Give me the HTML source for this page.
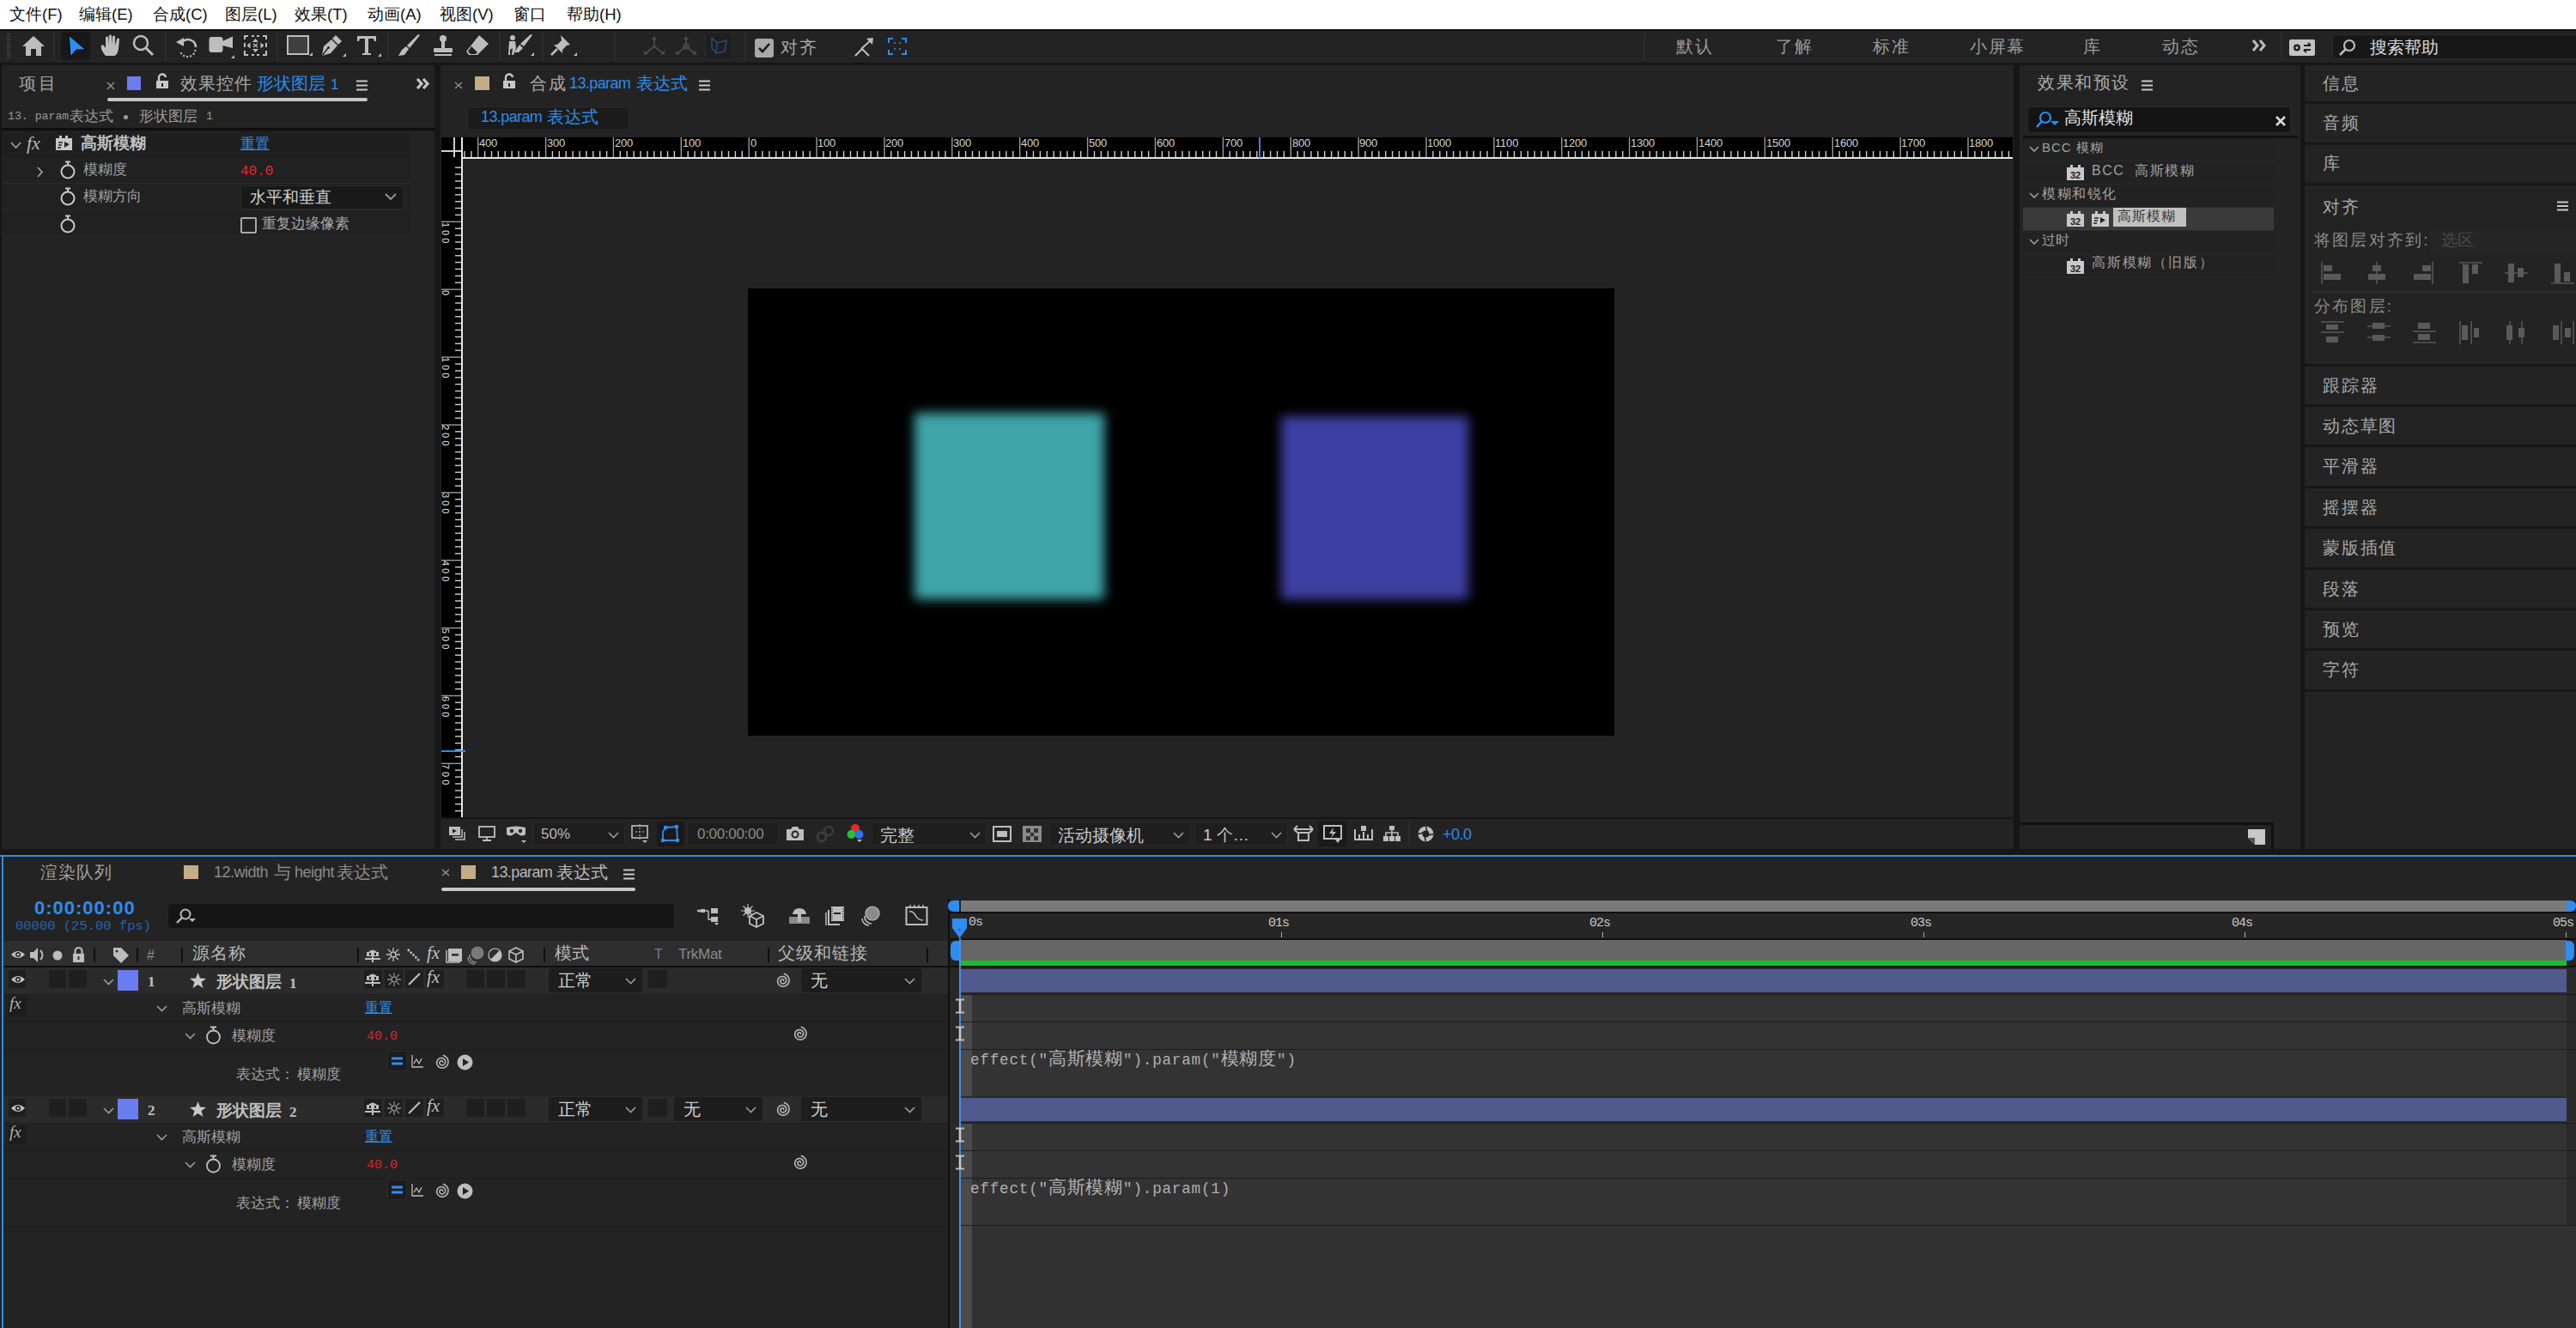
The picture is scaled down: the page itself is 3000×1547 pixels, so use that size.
<!DOCTYPE html>
<html><head><meta charset="utf-8">
<style>
*{box-sizing:border-box;margin:0;padding:0}
html,body{width:3000px;height:1547px;overflow:hidden;background:#161616;font-family:"Liberation Sans",sans-serif;color:#a8a8a8}
.a{position:absolute}
.t{position:absolute;white-space:nowrap;line-height:1}
svg{overflow:visible}
</style></head><body>
<div class="a" style="left:0px;top:0px;width:3000px;height:34px;background:#ffffff;"></div>
<div class="a" style="left:0px;top:34px;width:3000px;height:2px;background:#101010;"></div>
<div class="t" style="left:11px;top:8px;font-size:18.5px;color:#111;font-weight:normal;font-family:'Liberation Sans',sans-serif;">文件(F)</div>
<div class="t" style="left:92px;top:8px;font-size:18.5px;color:#111;font-weight:normal;font-family:'Liberation Sans',sans-serif;">编辑(E)</div>
<div class="t" style="left:178px;top:8px;font-size:18.5px;color:#111;font-weight:normal;font-family:'Liberation Sans',sans-serif;">合成(C)</div>
<div class="t" style="left:262px;top:8px;font-size:18.5px;color:#111;font-weight:normal;font-family:'Liberation Sans',sans-serif;">图层(L)</div>
<div class="t" style="left:343px;top:8px;font-size:18.5px;color:#111;font-weight:normal;font-family:'Liberation Sans',sans-serif;">效果(T)</div>
<div class="t" style="left:428px;top:8px;font-size:18.5px;color:#111;font-weight:normal;font-family:'Liberation Sans',sans-serif;">动画(A)</div>
<div class="t" style="left:512px;top:8px;font-size:18.5px;color:#111;font-weight:normal;font-family:'Liberation Sans',sans-serif;">视图(V)</div>
<div class="t" style="left:598px;top:8px;font-size:18.5px;color:#111;font-weight:normal;font-family:'Liberation Sans',sans-serif;">窗口</div>
<div class="t" style="left:660px;top:8px;font-size:18.5px;color:#111;font-weight:normal;font-family:'Liberation Sans',sans-serif;">帮助(H)</div>
<div class="a" style="left:0px;top:36px;width:3000px;height:37px;background:#232323;"></div>
<div class="a" style="left:0px;top:73px;width:3000px;height:3px;background:#161616;"></div>
<div class="a" style="left:8px;top:39px;width:4px;height:1.5px;background:#3a3a3a;"></div>
<div class="a" style="left:8px;top:42px;width:4px;height:1.5px;background:#3a3a3a;"></div>
<div class="a" style="left:8px;top:45px;width:4px;height:1.5px;background:#3a3a3a;"></div>
<div class="a" style="left:8px;top:48px;width:4px;height:1.5px;background:#3a3a3a;"></div>
<div class="a" style="left:8px;top:51px;width:4px;height:1.5px;background:#3a3a3a;"></div>
<div class="a" style="left:8px;top:54px;width:4px;height:1.5px;background:#3a3a3a;"></div>
<div class="a" style="left:8px;top:57px;width:4px;height:1.5px;background:#3a3a3a;"></div>
<div class="a" style="left:8px;top:60px;width:4px;height:1.5px;background:#3a3a3a;"></div>
<div class="a" style="left:8px;top:63px;width:4px;height:1.5px;background:#3a3a3a;"></div>
<div class="a" style="left:8px;top:66px;width:4px;height:1.5px;background:#3a3a3a;"></div>
<div class="a" style="left:62px;top:38px;width:2px;height:33px;background:#2c2c2c;"></div>
<div class="a" style="left:192px;top:38px;width:2px;height:33px;background:#2c2c2c;"></div>
<div class="a" style="left:322px;top:38px;width:2px;height:33px;background:#2c2c2c;"></div>
<div class="a" style="left:451px;top:38px;width:2px;height:33px;background:#2c2c2c;"></div>
<div class="a" style="left:581px;top:38px;width:2px;height:33px;background:#2c2c2c;"></div>
<div class="a" style="left:631px;top:38px;width:2px;height:33px;background:#2c2c2c;"></div>
<div class="a" style="left:715px;top:38px;width:2px;height:33px;background:#2c2c2c;"></div>
<div class="a" style="left:867px;top:38px;width:2px;height:33px;background:#2c2c2c;"></div>
<div class="a" style="left:1914px;top:38px;width:2px;height:33px;background:#2c2c2c;"></div>
<div class="a" style="left:2656px;top:38px;width:2px;height:33px;background:#2c2c2c;"></div>
<svg class="a" style="left:25px;top:41px" width="28" height="25" viewBox="0 0 28 25"><path d="M14 1 L27 13 L23 13 L23 24 L17 24 L17 16 L11 16 L11 24 L5 24 L5 13 L1 13 Z" fill="#bdbdbd"/></svg>
<div class="a" style="left:71px;top:37px;width:34px;height:33px;background:#181818;border-radius:3px"></div>
<svg class="a" style="left:79px;top:40px" width="22" height="27" viewBox="0 0 22 27"><path d="M1 1 L21 18 L10 18 L3 26 Z" fill="#2f8cf0" stroke="#000" stroke-width="1"/></svg>
<svg class="a" style="left:116px;top:40px" width="26" height="26" viewBox="0 0 26 26"><path d="M7 25 C3 20 1 16 2 13 L4 12 L7 16 L7 4 C7 2 10 2 10 4 L10 12 L11 2 C11 0 14 0 14 2 L14 12 L15 3 C15 1 18 1 18 3 L18 13 L20 6 C20 4 23 4 23 6 L22 17 C21 22 19 25 17 25 Z" fill="#bdbdbd"/></svg>
<svg class="a" style="left:154px;top:40px" width="26" height="26" viewBox="0 0 26 26"><circle cx="10" cy="10" r="8" fill="none" stroke="#bdbdbd" stroke-width="2.4"/><path d="M16 16 L24 24" stroke="#bdbdbd" stroke-width="3"/></svg>
<svg class="a" style="left:204px;top:40px" width="28" height="26" viewBox="0 0 28 26"><path d="M8 9.5 A9 9 0 0 1 24 15" fill="none" stroke="#bdbdbd" stroke-width="2.6"/><path d="M23.5 18 A9 9 0 0 1 6 20" fill="none" stroke="#bdbdbd" stroke-width="2.2" stroke-dasharray="2 2.2"/><path d="M1 9 L10 4 L10 14 Z" fill="#bdbdbd"/></svg>
<svg class="a" style="left:243px;top:40px" width="32" height="30" viewBox="0 0 32 30"><rect x="0.5" y="3" width="16" height="18" rx="3" fill="#bdbdbd"/><path d="M16 8 L28 2.5 L28 16 L16 13 Z" fill="#bdbdbd"/><path d="M26 28 L30 24 L30 28 Z" fill="#bdbdbd"/></svg>
<svg class="a" style="left:284px;top:41px" width="27" height="24" viewBox="0 0 27 24"><path d="M1 5 L1 1 L5 1 M9 1 L12 1 M15 1 L18 1 M22 1 L26 1 L26 5 M26 9 L26 14 M26 18 L26 23 L22 23 M18 23 L15 23 M12 23 L9 23 M5 23 L1 23 L1 18 M1 14 L1 9" fill="none" stroke="#bdbdbd" stroke-width="2"/><path d="M13.5 4 L10 8 L17 8 Z M13.5 20 L10 16 L17 16 Z M3.5 12 L7.5 8.5 L7.5 15.5 Z M23.5 12 L19.5 8.5 L19.5 15.5 Z" fill="#bdbdbd"/><path d="M11 10 L16 14 M16 10 L11 14" stroke="#bdbdbd" stroke-width="1.2"/></svg>
<svg class="a" style="left:334px;top:41px" width="30" height="25" viewBox="0 0 30 25"><rect x="1" y="1" width="24" height="21" fill="#404040" stroke="#bdbdbd" stroke-width="2"/><path d="M26 24 L30 20 L30 24 Z" fill="#bdbdbd"/></svg>
<svg class="a" style="left:373px;top:40px" width="30" height="27" viewBox="0 0 30 27"><path d="M2 25 L4 14 L13 6 L20 13 L12 22 Z" fill="#bdbdbd"/><path d="M2.5 24.5 L9 16" stroke="#232323" stroke-width="1.4"/><circle cx="9.5" cy="15.5" r="1.5" fill="#232323"/><path d="M14 5 L18 1 L25 8 L21 12 Z" fill="#bdbdbd"/><path d="M26 26 L30 22 L30 26 Z" fill="#bdbdbd"/></svg>
<svg class="a" style="left:414px;top:41px" width="30" height="25" viewBox="0 0 30 25"><path d="M2 1 L24 1 L24 7 L22 7 L21 4 L15 4 L15 21 L18 21 L18 23 L8 23 L8 21 L11 21 L11 4 L5 4 L4 7 L2 7 Z" fill="#bdbdbd"/><path d="M26 25 L30 21 L30 25 Z" fill="#bdbdbd"/></svg>
<svg class="a" style="left:463px;top:40px" width="28" height="26" viewBox="0 0 28 26"><path d="M26 1 L14 16 L11 13 L24 0 Z" fill="#bdbdbd"/><path d="M10 14 L13 17 L8 24 L1 25 L5 18 Z" fill="#bdbdbd"/></svg>
<svg class="a" style="left:503px;top:40px" width="27" height="26" viewBox="0 0 27 26"><circle cx="13" cy="5" r="4" fill="#bdbdbd"/><rect x="11" y="7" width="4" height="10" fill="#bdbdbd"/><rect x="2" y="16" width="22" height="5" rx="1" fill="#bdbdbd"/><rect x="3" y="23" width="20" height="2" fill="#bdbdbd"/></svg>
<svg class="a" style="left:542px;top:40px" width="28" height="26" viewBox="0 0 28 26"><path d="M16 1 L27 11 L14 24 L4 24 L1 20 Z" fill="#bdbdbd"/><path d="M7 14 L14 21 L12 23 L6 23 L3 20 Z" fill="#232323"/></svg>
<svg class="a" style="left:590px;top:40px" width="34" height="26" viewBox="0 0 34 26"><circle cx="7" cy="4" r="3" fill="#bdbdbd"/><path d="M3 8 L10 8 L11 16 L8 24 L6 24 L7 16 L4 18 L4 24 L2 24 Z" fill="#bdbdbd"/><path d="M30 1 L20 14 L16 11 L28 0 Z M15 12 L19 16 L14 21 L9 21 Z" fill="#bdbdbd"/><path d="M28 25 L32 21 L32 25 Z" fill="#bdbdbd"/></svg>
<svg class="a" style="left:641px;top:40px" width="32" height="26" viewBox="0 0 32 26"><path d="M12 1 L23 12 L19 13 L14 18 L14 22 L4 12 L8 12 L13 7 Z" fill="#bdbdbd"/><path d="M8 17 L1 24" stroke="#bdbdbd" stroke-width="2.5"/><path d="M27 25 L31 21 L31 25 Z" fill="#bdbdbd"/></svg>
<svg class="a" style="left:748px;top:42px" width="28" height="24" viewBox="0 0 28 24"><path d="M14 12 L14 2 M14 12 L4 20 M14 12 L24 20" stroke="#4a4a4a" stroke-width="2"/><path d="M11 4 L14 0 L17 4 Z M2 17 L2 22 L7 21 Z M26 17 L26 22 L21 21 Z" fill="#4a4a4a"/></svg>
<svg class="a" style="left:785px;top:42px" width="28" height="24" viewBox="0 0 28 24"><path d="M14 12 L14 2 M14 12 L4 20 M14 12 L24 20" stroke="#4a4a4a" stroke-width="2"/><circle cx="14" cy="12" r="3" fill="none" stroke="#4a4a4a" stroke-width="1.5"/><path d="M11 4 L14 0 L17 4 Z M2 17 L2 22 L7 21 Z M26 17 L26 22 L21 21 Z" fill="#4a4a4a"/></svg>
<div class="a" style="left:821px;top:37px;width:32px;height:33px;background:#1e1e1e;border:1px solid #2a2a2a;border-radius:3px"></div>
<svg class="a" style="left:826px;top:42px" width="22" height="22" viewBox="0 0 22 22"><path d="M3 2 L9 8 L20 5 M9 8 L8 20 L18 18 L20 5 M3 2 L3 14 L8 20" fill="none" stroke="#25406a" stroke-width="2"/></svg>
<div class="a" style="left:879px;top:45px;width:22px;height:22px;background:#a8a8a8;border-radius:3px"></div>
<svg class="a" style="left:882px;top:49px" width="16" height="14" viewBox="0 0 16 14"><path d="M2 7 L6 11 L14 2" fill="none" stroke="#1a1a1a" stroke-width="2.6"/></svg>
<div class="t" style="left:909px;top:45px;font-size:20px;color:#a8a8a8;font-weight:normal;font-family:'Liberation Sans',sans-serif;letter-spacing:1.6px">对齐</div>
<svg class="a" style="left:994px;top:43px" width="24" height="24" viewBox="0 0 24 24"><path d="M2 22 L10 14 L18 22" fill="none" stroke="#bdbdbd" stroke-width="2"/><path d="M9 14 L21 3" stroke="#bdbdbd" stroke-width="2"/><path d="M15 2 L23 1 L22 9 Z" fill="#bdbdbd"/></svg>
<svg class="a" style="left:1034px;top:44px" width="22" height="20" viewBox="0 0 22 20"><path d="M1 6 L1 1 L6 1 M16 1 L21 1 L21 6 M21 14 L21 19 L16 19 M6 19 L1 19 L1 14" fill="none" stroke="#2f8cf0" stroke-width="2"/><path d="M8 7 L8 6 L9 6 M13 6 L14 6 L14 7 M14 12 L14 13 L13 13 M9 13 L8 13 L8 12" fill="none" stroke="#2f8cf0" stroke-width="1.5"/></svg>
<div class="t" style="left:1952px;top:44px;font-size:20px;color:#9a9a9a;font-weight:normal;font-family:'Liberation Sans',sans-serif;letter-spacing:1.6px">默认</div>
<div class="t" style="left:2068px;top:44px;font-size:20px;color:#9a9a9a;font-weight:normal;font-family:'Liberation Sans',sans-serif;letter-spacing:1.6px">了解</div>
<div class="t" style="left:2181px;top:44px;font-size:20px;color:#9a9a9a;font-weight:normal;font-family:'Liberation Sans',sans-serif;letter-spacing:1.6px">标准</div>
<div class="t" style="left:2294px;top:44px;font-size:20px;color:#9a9a9a;font-weight:normal;font-family:'Liberation Sans',sans-serif;letter-spacing:1.6px">小屏幕</div>
<div class="t" style="left:2426px;top:44px;font-size:20px;color:#9a9a9a;font-weight:normal;font-family:'Liberation Sans',sans-serif;letter-spacing:1.6px">库</div>
<div class="t" style="left:2518px;top:44px;font-size:20px;color:#9a9a9a;font-weight:normal;font-family:'Liberation Sans',sans-serif;letter-spacing:1.6px">动态</div>
<svg class="a" style="left:2623px;top:46px" width="18" height="14" viewBox="0 0 18 14"><path d="M1 1 L6 7 L1 13 M9 1 L14 7 L9 13" fill="none" stroke="#bdbdbd" stroke-width="3"/></svg>
<div class="a" style="left:2666px;top:46px;width:30px;height:19px;background:#c4c4c4;border-radius:2px"></div>
<svg class="a" style="left:2668px;top:48px" width="26" height="15" viewBox="0 0 26 15"><circle cx="7" cy="7.5" r="4" fill="#222"/><circle cx="7" cy="7.5" r="1.5" fill="#c4c4c4"/><path d="M15 5 L23 5 M23 5 L20 2 M15 10 L23 10 M15 10 L18 13" stroke="#222" stroke-width="2" fill="none"/></svg>
<div class="a" style="left:2716px;top:40px;width:290px;height:29px;background:#181818;border:1px solid #2c2c2c;border-radius:5px"></div>
<svg class="a" style="left:2723px;top:45px" width="22" height="20" viewBox="0 0 22 20"><circle cx="13" cy="8" r="6" fill="none" stroke="#bdbdbd" stroke-width="2.2"/><path d="M9 12 L2 19" stroke="#bdbdbd" stroke-width="2.5"/></svg>
<div class="t" style="left:2760px;top:45px;font-size:20px;color:#d8d8d8;font-weight:normal;font-family:'Liberation Sans',sans-serif;">搜索帮助</div>
<div class="a" style="left:2px;top:76px;width:504px;height:913px;background:#232323;"></div>
<div class="t" style="left:22px;top:87px;font-size:20px;color:#a0a0a0;font-weight:normal;font-family:'Liberation Sans',sans-serif;letter-spacing:3px">项目</div>
<svg class="a" style="left:124px;top:95px" width="11" height="10" viewBox="0 0 11 10"><path d="M1 1 L9 9 M9 1 L1 9" stroke="#8a8a8a" stroke-width="1.6"/></svg>
<div class="a" style="left:148px;top:89px;width:16px;height:16px;background:#6a7cf0;"></div>
<svg class="a" style="left:181px;top:86px" width="16" height="18" viewBox="0 0 16 18"><path d="M4 8 L4 5 A4 4 0 0 1 12 4" fill="none" stroke="#c8c8c8" stroke-width="2.4"/><rect x="1" y="8" width="14" height="9" fill="#c8c8c8"/><rect x="7" y="11" width="2" height="4" fill="#232323"/></svg>
<div class="t" style="left:210px;top:87px;font-size:20px;color:#a8a8a8;font-weight:normal;font-family:'Liberation Sans',sans-serif;letter-spacing:1px">效果控件</div>
<div class="t" style="left:299px;top:87px;font-size:20px;color:#2d8ceb;font-weight:normal;font-family:'Liberation Sans',sans-serif;">形状图层</div>
<div class="t" style="left:385px;top:90px;font-size:17px;color:#2d8ceb;font-weight:normal;font-family:'Liberation Sans',sans-serif;">1</div>
<svg class="a" style="left:414px;top:93px" width="15" height="13" viewBox="0 0 15 13"><path d="M1 1.5 L14 1.5 M1 6.5 L14 6.5 M1 11.5 L14 11.5" stroke="#c8c8c8" stroke-width="2"/></svg>
<div class="a" style="left:125px;top:114px;width:303px;height:4px;background:#c8c8c8;border-radius:2px"></div>
<svg class="a" style="left:484px;top:91px" width="17" height="13" viewBox="0 0 17 13"><path d="M2 1 L7 6.5 L2 12 M9 1 L14 6.5 L9 12" fill="none" stroke="#c8c8c8" stroke-width="3.2"/></svg>
<div class="t" style="left:9px;top:129px;font-size:13.2px;color:#9a9a9a;font-weight:normal;font-family:'Liberation Mono',monospace;">13. param</div>
<div class="t" style="left:81px;top:127px;font-size:17px;color:#9a9a9a;font-weight:normal;font-family:'Liberation Sans',sans-serif;">表达式</div>
<svg class="a" style="left:143px;top:133px" width="7" height="7" viewBox="0 0 7 7"><circle cx="3.5" cy="3.5" r="2.6" fill="#9a9a9a"/></svg>
<div class="t" style="left:162px;top:127px;font-size:17px;color:#9a9a9a;font-weight:normal;font-family:'Liberation Sans',sans-serif;">形状图层</div>
<div class="t" style="left:240px;top:129px;font-size:13.2px;color:#9a9a9a;font-weight:normal;font-family:'Liberation Mono',monospace;">1</div>
<div class="a" style="left:2px;top:149px;width:504px;height:3px;background:#0e0e0e;"></div>
<div class="a" style="left:2px;top:152px;width:475px;height:31px;background:#1f1f1f;"></div>
<div class="a" style="left:2px;top:183px;width:475px;height:31px;background:#212121;"></div>
<div class="a" style="left:2px;top:213px;width:475px;height:1px;background:#2a2a2a;"></div>
<div class="a" style="left:2px;top:214px;width:475px;height:31px;background:#212121;"></div>
<div class="a" style="left:2px;top:244px;width:475px;height:1px;background:#2a2a2a;"></div>
<div class="a" style="left:2px;top:245px;width:475px;height:31px;background:#212121;"></div>
<div class="a" style="left:2px;top:275px;width:475px;height:1px;background:#2a2a2a;"></div>
<svg class="a" style="left:12px;top:165px" width="13" height="9" viewBox="0 0 13 9"><path d="M1 1 L6.5 7 L12 1" fill="none" stroke="#9a9a9a" stroke-width="1.8"/></svg>
<div class="t" style="left:31px;top:156px;font-size:22px;color:#b8b8b8;font-weight:normal;font-family:'Liberation Serif',serif;"><i>fx</i></div>
<svg class="a" style="left:64px;top:157px" width="21" height="19" viewBox="0 0 21 19"><path d="M1 4 L5 4 L5 1 L8 1 L8 4 L12 4 L12 1 L15 1 L15 4 L20 4 L20 18 L1 18 Z" fill="#c8c8c8"/><path d="M4 9 L9 9 M4 12 L8 12 M3 15 L7 15" stroke="#232323" stroke-width="1.6"/><path d="M11 8 L17 11 L11 15 Z" fill="#232323"/></svg>
<div class="t" style="left:94px;top:158px;font-size:18.5px;color:#c0c0c0;font-weight:bold;font-family:'Liberation Sans',sans-serif;">高斯模糊</div>
<div class="t" style="left:280px;top:159px;font-size:17px;color:#2d8ceb;font-weight:normal;font-family:'Liberation Sans',sans-serif;text-decoration:underline">重置</div>
<svg class="a" style="left:43px;top:194px" width="8" height="13" viewBox="0 0 8 13"><path d="M1 1 L6 6.5 L1 12" fill="none" stroke="#9a9a9a" stroke-width="1.8"/></svg>
<svg class="a" style="left:70px;top:187px" width="18" height="22" viewBox="0 0 18 22"><path d="M6 1.5 L12 1.5 M9 1.5 L9 5" stroke="#c8c8c8" stroke-width="2"/><circle cx="9" cy="13" r="7.5" fill="none" stroke="#c8c8c8" stroke-width="2"/></svg>
<div class="t" style="left:97px;top:189px;font-size:17px;color:#a0a0a0;font-weight:normal;font-family:'Liberation Sans',sans-serif;">模糊度</div>
<div class="t" style="left:280px;top:192px;font-size:16px;color:#e02a2f;font-weight:normal;font-family:'Liberation Mono',monospace;">40.0</div>
<svg class="a" style="left:70px;top:218px" width="18" height="22" viewBox="0 0 18 22"><path d="M6 1.5 L12 1.5 M9 1.5 L9 5" stroke="#c8c8c8" stroke-width="2"/><circle cx="9" cy="13" r="7.5" fill="none" stroke="#c8c8c8" stroke-width="2"/></svg>
<div class="t" style="left:97px;top:220px;font-size:17px;color:#a0a0a0;font-weight:normal;font-family:'Liberation Sans',sans-serif;">模糊方向</div>
<div class="a" style="left:280px;top:216px;width:190px;height:28px;background:#191919;border:1px solid #2a2a2a;border-radius:3px"></div>
<div class="t" style="left:291px;top:220px;font-size:19px;color:#d0d0d0;font-weight:normal;font-family:'Liberation Sans',sans-serif;">水平和垂直</div>
<svg class="a" style="left:448px;top:225px" width="14" height="9" viewBox="0 0 14 9"><path d="M1 1 L7 7 L13 1" fill="none" stroke="#9a9a9a" stroke-width="1.8"/></svg>
<svg class="a" style="left:70px;top:250px" width="18" height="22" viewBox="0 0 18 22"><path d="M6 1.5 L12 1.5 M9 1.5 L9 5" stroke="#c8c8c8" stroke-width="2"/><circle cx="9" cy="13" r="7.5" fill="none" stroke="#c8c8c8" stroke-width="2"/></svg>
<div class="a" style="left:280px;top:253px;width:19px;height:19px;background:transparent;border:2px solid #a8a8a8;border-radius:2px"></div>
<div class="t" style="left:305px;top:252px;font-size:17px;color:#a8a8a8;font-weight:normal;font-family:'Liberation Sans',sans-serif;">重复边缘像素</div>
<div class="a" style="left:513px;top:76px;width:1832px;height:913px;background:#232323;"></div>
<svg class="a" style="left:529px;top:95px" width="10" height="9" viewBox="0 0 10 9"><path d="M1 1 L9 8 M9 1 L1 8" stroke="#8a8a8a" stroke-width="1.6"/></svg>
<div class="a" style="left:553px;top:89px;width:17px;height:16px;background:#c3ad87;"></div>
<svg class="a" style="left:585px;top:86px" width="16" height="18" viewBox="0 0 16 18"><path d="M4 8 L4 5 A4 4 0 0 1 12 4" fill="none" stroke="#c8c8c8" stroke-width="2.4"/><rect x="1" y="8" width="14" height="9" fill="#c8c8c8"/><rect x="7" y="11" width="2" height="4" fill="#232323"/></svg>
<div class="t" style="left:617px;top:87px;font-size:20px;color:#a8a8a8;font-weight:normal;font-family:'Liberation Sans',sans-serif;letter-spacing:1.6px">合成</div>
<div class="t" style="left:663px;top:88px;font-size:18px;color:#2d8ceb;font-weight:normal;font-family:'Liberation Sans',sans-serif;letter-spacing:-0.6px">13.param</div>
<div class="t" style="left:741px;top:87px;font-size:20px;color:#2d8ceb;font-weight:normal;font-family:'Liberation Sans',sans-serif;">表达式</div>
<svg class="a" style="left:813px;top:93px" width="15" height="13" viewBox="0 0 15 13"><path d="M1 1.5 L14 1.5 M1 6.5 L14 6.5 M1 11.5 L14 11.5" stroke="#c8c8c8" stroke-width="2"/></svg>
<div class="a" style="left:544px;top:124px;width:189px;height:28px;background:#1b1b1b;border:1px solid #2b2b2b;border-radius:3px"></div>
<div class="t" style="left:560px;top:127px;font-size:18px;color:#2d8ceb;font-weight:normal;font-family:'Liberation Sans',sans-serif;letter-spacing:-0.6px">13.param</div>
<div class="t" style="left:637px;top:126px;font-size:20px;color:#2d8ceb;font-weight:normal;font-family:'Liberation Sans',sans-serif;">表达式</div>
<div class="a" style="left:514px;top:160px;width:1830px;height:23px;background:#000;"></div>
<div class="a" style="left:514px;top:183px;width:1830px;height:2px;background:#e8e8e8;"></div>
<div class="a" style="left:514px;top:160px;width:24px;height:792px;background:#000;"></div>
<div class="a" style="left:537px;top:160px;width:2px;height:792px;background:#e8e8e8;"></div>
<div class="a" style="left:528px;top:160px;width:1.5px;height:23px;background:#cfcfcf;"></div>
<div class="a" style="left:514px;top:175px;width:23px;height:1.5px;background:#cfcfcf;"></div>
<svg class="a" style="left:540px;top:160px" width="1804" height="23"><rect x="0.2" y="16" width="1.4" height="7" fill="#cfcfcf"/><rect x="8.1" y="16" width="1.4" height="7" fill="#cfcfcf"/><rect x="16.0" y="0" width="1.4" height="23" fill="#9a9a9a"/><rect x="23.9" y="16" width="1.4" height="7" fill="#cfcfcf"/><rect x="31.8" y="16" width="1.4" height="7" fill="#cfcfcf"/><rect x="39.6" y="16" width="1.4" height="7" fill="#cfcfcf"/><rect x="47.5" y="16" width="1.4" height="7" fill="#cfcfcf"/><rect x="55.4" y="16" width="1.4" height="7" fill="#cfcfcf"/><rect x="63.3" y="16" width="1.4" height="7" fill="#cfcfcf"/><rect x="71.2" y="16" width="1.4" height="7" fill="#cfcfcf"/><rect x="79.1" y="16" width="1.4" height="7" fill="#cfcfcf"/><rect x="87.0" y="16" width="1.4" height="7" fill="#cfcfcf"/><rect x="94.9" y="0" width="1.4" height="23" fill="#9a9a9a"/><rect x="102.7" y="16" width="1.4" height="7" fill="#cfcfcf"/><rect x="110.6" y="16" width="1.4" height="7" fill="#cfcfcf"/><rect x="118.5" y="16" width="1.4" height="7" fill="#cfcfcf"/><rect x="126.4" y="16" width="1.4" height="7" fill="#cfcfcf"/><rect x="134.3" y="16" width="1.4" height="7" fill="#cfcfcf"/><rect x="142.2" y="16" width="1.4" height="7" fill="#cfcfcf"/><rect x="150.1" y="16" width="1.4" height="7" fill="#cfcfcf"/><rect x="158.0" y="16" width="1.4" height="7" fill="#cfcfcf"/><rect x="165.9" y="16" width="1.4" height="7" fill="#cfcfcf"/><rect x="173.7" y="0" width="1.4" height="23" fill="#9a9a9a"/><rect x="181.6" y="16" width="1.4" height="7" fill="#cfcfcf"/><rect x="189.5" y="16" width="1.4" height="7" fill="#cfcfcf"/><rect x="197.4" y="16" width="1.4" height="7" fill="#cfcfcf"/><rect x="205.3" y="16" width="1.4" height="7" fill="#cfcfcf"/><rect x="213.2" y="16" width="1.4" height="7" fill="#cfcfcf"/><rect x="221.1" y="16" width="1.4" height="7" fill="#cfcfcf"/><rect x="229.0" y="16" width="1.4" height="7" fill="#cfcfcf"/><rect x="236.8" y="16" width="1.4" height="7" fill="#cfcfcf"/><rect x="244.7" y="16" width="1.4" height="7" fill="#cfcfcf"/><rect x="252.6" y="0" width="1.4" height="23" fill="#9a9a9a"/><rect x="260.5" y="16" width="1.4" height="7" fill="#cfcfcf"/><rect x="268.4" y="16" width="1.4" height="7" fill="#cfcfcf"/><rect x="276.3" y="16" width="1.4" height="7" fill="#cfcfcf"/><rect x="284.2" y="16" width="1.4" height="7" fill="#cfcfcf"/><rect x="292.1" y="16" width="1.4" height="7" fill="#cfcfcf"/><rect x="299.9" y="16" width="1.4" height="7" fill="#cfcfcf"/><rect x="307.8" y="16" width="1.4" height="7" fill="#cfcfcf"/><rect x="315.7" y="16" width="1.4" height="7" fill="#cfcfcf"/><rect x="323.6" y="16" width="1.4" height="7" fill="#cfcfcf"/><rect x="331.5" y="0" width="1.4" height="23" fill="#9a9a9a"/><rect x="339.4" y="16" width="1.4" height="7" fill="#cfcfcf"/><rect x="347.3" y="16" width="1.4" height="7" fill="#cfcfcf"/><rect x="355.2" y="16" width="1.4" height="7" fill="#cfcfcf"/><rect x="363.1" y="16" width="1.4" height="7" fill="#cfcfcf"/><rect x="370.9" y="16" width="1.4" height="7" fill="#cfcfcf"/><rect x="378.8" y="16" width="1.4" height="7" fill="#cfcfcf"/><rect x="386.7" y="16" width="1.4" height="7" fill="#cfcfcf"/><rect x="394.6" y="16" width="1.4" height="7" fill="#cfcfcf"/><rect x="402.5" y="16" width="1.4" height="7" fill="#cfcfcf"/><rect x="410.4" y="0" width="1.4" height="23" fill="#9a9a9a"/><rect x="418.3" y="16" width="1.4" height="7" fill="#cfcfcf"/><rect x="426.2" y="16" width="1.4" height="7" fill="#cfcfcf"/><rect x="434.0" y="16" width="1.4" height="7" fill="#cfcfcf"/><rect x="441.9" y="16" width="1.4" height="7" fill="#cfcfcf"/><rect x="449.8" y="16" width="1.4" height="7" fill="#cfcfcf"/><rect x="457.7" y="16" width="1.4" height="7" fill="#cfcfcf"/><rect x="465.6" y="16" width="1.4" height="7" fill="#cfcfcf"/><rect x="473.5" y="16" width="1.4" height="7" fill="#cfcfcf"/><rect x="481.4" y="16" width="1.4" height="7" fill="#cfcfcf"/><rect x="489.3" y="0" width="1.4" height="23" fill="#9a9a9a"/><rect x="497.1" y="16" width="1.4" height="7" fill="#cfcfcf"/><rect x="505.0" y="16" width="1.4" height="7" fill="#cfcfcf"/><rect x="512.9" y="16" width="1.4" height="7" fill="#cfcfcf"/><rect x="520.8" y="16" width="1.4" height="7" fill="#cfcfcf"/><rect x="528.7" y="16" width="1.4" height="7" fill="#cfcfcf"/><rect x="536.6" y="16" width="1.4" height="7" fill="#cfcfcf"/><rect x="544.5" y="16" width="1.4" height="7" fill="#cfcfcf"/><rect x="552.4" y="16" width="1.4" height="7" fill="#cfcfcf"/><rect x="560.3" y="16" width="1.4" height="7" fill="#cfcfcf"/><rect x="568.1" y="0" width="1.4" height="23" fill="#9a9a9a"/><rect x="576.0" y="16" width="1.4" height="7" fill="#cfcfcf"/><rect x="583.9" y="16" width="1.4" height="7" fill="#cfcfcf"/><rect x="591.8" y="16" width="1.4" height="7" fill="#cfcfcf"/><rect x="599.7" y="16" width="1.4" height="7" fill="#cfcfcf"/><rect x="607.6" y="16" width="1.4" height="7" fill="#cfcfcf"/><rect x="615.5" y="16" width="1.4" height="7" fill="#cfcfcf"/><rect x="623.4" y="16" width="1.4" height="7" fill="#cfcfcf"/><rect x="631.2" y="16" width="1.4" height="7" fill="#cfcfcf"/><rect x="639.1" y="16" width="1.4" height="7" fill="#cfcfcf"/><rect x="647.0" y="0" width="1.4" height="23" fill="#9a9a9a"/><rect x="654.9" y="16" width="1.4" height="7" fill="#cfcfcf"/><rect x="662.8" y="16" width="1.4" height="7" fill="#cfcfcf"/><rect x="670.7" y="16" width="1.4" height="7" fill="#cfcfcf"/><rect x="678.6" y="16" width="1.4" height="7" fill="#cfcfcf"/><rect x="686.5" y="16" width="1.4" height="7" fill="#cfcfcf"/><rect x="694.3" y="16" width="1.4" height="7" fill="#cfcfcf"/><rect x="702.2" y="16" width="1.4" height="7" fill="#cfcfcf"/><rect x="710.1" y="16" width="1.4" height="7" fill="#cfcfcf"/><rect x="718.0" y="16" width="1.4" height="7" fill="#cfcfcf"/><rect x="725.9" y="0" width="1.4" height="23" fill="#9a9a9a"/><rect x="733.8" y="16" width="1.4" height="7" fill="#cfcfcf"/><rect x="741.7" y="16" width="1.4" height="7" fill="#cfcfcf"/><rect x="749.6" y="16" width="1.4" height="7" fill="#cfcfcf"/><rect x="757.5" y="16" width="1.4" height="7" fill="#cfcfcf"/><rect x="765.3" y="16" width="1.4" height="7" fill="#cfcfcf"/><rect x="773.2" y="16" width="1.4" height="7" fill="#cfcfcf"/><rect x="781.1" y="16" width="1.4" height="7" fill="#cfcfcf"/><rect x="789.0" y="16" width="1.4" height="7" fill="#cfcfcf"/><rect x="796.9" y="16" width="1.4" height="7" fill="#cfcfcf"/><rect x="804.8" y="0" width="1.4" height="23" fill="#9a9a9a"/><rect x="812.7" y="16" width="1.4" height="7" fill="#cfcfcf"/><rect x="820.6" y="16" width="1.4" height="7" fill="#cfcfcf"/><rect x="828.4" y="16" width="1.4" height="7" fill="#cfcfcf"/><rect x="836.3" y="16" width="1.4" height="7" fill="#cfcfcf"/><rect x="844.2" y="16" width="1.4" height="7" fill="#cfcfcf"/><rect x="852.1" y="16" width="1.4" height="7" fill="#cfcfcf"/><rect x="860.0" y="16" width="1.4" height="7" fill="#cfcfcf"/><rect x="867.9" y="16" width="1.4" height="7" fill="#cfcfcf"/><rect x="875.8" y="16" width="1.4" height="7" fill="#cfcfcf"/><rect x="883.7" y="0" width="1.4" height="23" fill="#9a9a9a"/><rect x="891.5" y="16" width="1.4" height="7" fill="#cfcfcf"/><rect x="899.4" y="16" width="1.4" height="7" fill="#cfcfcf"/><rect x="907.3" y="16" width="1.4" height="7" fill="#cfcfcf"/><rect x="915.2" y="16" width="1.4" height="7" fill="#cfcfcf"/><rect x="923.1" y="16" width="1.4" height="7" fill="#cfcfcf"/><rect x="931.0" y="16" width="1.4" height="7" fill="#cfcfcf"/><rect x="938.9" y="16" width="1.4" height="7" fill="#cfcfcf"/><rect x="946.8" y="16" width="1.4" height="7" fill="#cfcfcf"/><rect x="954.7" y="16" width="1.4" height="7" fill="#cfcfcf"/><rect x="962.5" y="0" width="1.4" height="23" fill="#9a9a9a"/><rect x="970.4" y="16" width="1.4" height="7" fill="#cfcfcf"/><rect x="978.3" y="16" width="1.4" height="7" fill="#cfcfcf"/><rect x="986.2" y="16" width="1.4" height="7" fill="#cfcfcf"/><rect x="994.1" y="16" width="1.4" height="7" fill="#cfcfcf"/><rect x="1002.0" y="16" width="1.4" height="7" fill="#cfcfcf"/><rect x="1009.9" y="16" width="1.4" height="7" fill="#cfcfcf"/><rect x="1017.8" y="16" width="1.4" height="7" fill="#cfcfcf"/><rect x="1025.6" y="16" width="1.4" height="7" fill="#cfcfcf"/><rect x="1033.5" y="16" width="1.4" height="7" fill="#cfcfcf"/><rect x="1041.4" y="0" width="1.4" height="23" fill="#9a9a9a"/><rect x="1049.3" y="16" width="1.4" height="7" fill="#cfcfcf"/><rect x="1057.2" y="16" width="1.4" height="7" fill="#cfcfcf"/><rect x="1065.1" y="16" width="1.4" height="7" fill="#cfcfcf"/><rect x="1073.0" y="16" width="1.4" height="7" fill="#cfcfcf"/><rect x="1080.9" y="16" width="1.4" height="7" fill="#cfcfcf"/><rect x="1088.7" y="16" width="1.4" height="7" fill="#cfcfcf"/><rect x="1096.6" y="16" width="1.4" height="7" fill="#cfcfcf"/><rect x="1104.5" y="16" width="1.4" height="7" fill="#cfcfcf"/><rect x="1112.4" y="16" width="1.4" height="7" fill="#cfcfcf"/><rect x="1120.3" y="0" width="1.4" height="23" fill="#9a9a9a"/><rect x="1128.2" y="16" width="1.4" height="7" fill="#cfcfcf"/><rect x="1136.1" y="16" width="1.4" height="7" fill="#cfcfcf"/><rect x="1144.0" y="16" width="1.4" height="7" fill="#cfcfcf"/><rect x="1151.9" y="16" width="1.4" height="7" fill="#cfcfcf"/><rect x="1159.7" y="16" width="1.4" height="7" fill="#cfcfcf"/><rect x="1167.6" y="16" width="1.4" height="7" fill="#cfcfcf"/><rect x="1175.5" y="16" width="1.4" height="7" fill="#cfcfcf"/><rect x="1183.4" y="16" width="1.4" height="7" fill="#cfcfcf"/><rect x="1191.3" y="16" width="1.4" height="7" fill="#cfcfcf"/><rect x="1199.2" y="0" width="1.4" height="23" fill="#9a9a9a"/><rect x="1207.1" y="16" width="1.4" height="7" fill="#cfcfcf"/><rect x="1215.0" y="16" width="1.4" height="7" fill="#cfcfcf"/><rect x="1222.8" y="16" width="1.4" height="7" fill="#cfcfcf"/><rect x="1230.7" y="16" width="1.4" height="7" fill="#cfcfcf"/><rect x="1238.6" y="16" width="1.4" height="7" fill="#cfcfcf"/><rect x="1246.5" y="16" width="1.4" height="7" fill="#cfcfcf"/><rect x="1254.4" y="16" width="1.4" height="7" fill="#cfcfcf"/><rect x="1262.3" y="16" width="1.4" height="7" fill="#cfcfcf"/><rect x="1270.2" y="16" width="1.4" height="7" fill="#cfcfcf"/><rect x="1278.1" y="0" width="1.4" height="23" fill="#9a9a9a"/><rect x="1285.9" y="16" width="1.4" height="7" fill="#cfcfcf"/><rect x="1293.8" y="16" width="1.4" height="7" fill="#cfcfcf"/><rect x="1301.7" y="16" width="1.4" height="7" fill="#cfcfcf"/><rect x="1309.6" y="16" width="1.4" height="7" fill="#cfcfcf"/><rect x="1317.5" y="16" width="1.4" height="7" fill="#cfcfcf"/><rect x="1325.4" y="16" width="1.4" height="7" fill="#cfcfcf"/><rect x="1333.3" y="16" width="1.4" height="7" fill="#cfcfcf"/><rect x="1341.2" y="16" width="1.4" height="7" fill="#cfcfcf"/><rect x="1349.1" y="16" width="1.4" height="7" fill="#cfcfcf"/><rect x="1356.9" y="0" width="1.4" height="23" fill="#9a9a9a"/><rect x="1364.8" y="16" width="1.4" height="7" fill="#cfcfcf"/><rect x="1372.7" y="16" width="1.4" height="7" fill="#cfcfcf"/><rect x="1380.6" y="16" width="1.4" height="7" fill="#cfcfcf"/><rect x="1388.5" y="16" width="1.4" height="7" fill="#cfcfcf"/><rect x="1396.4" y="16" width="1.4" height="7" fill="#cfcfcf"/><rect x="1404.3" y="16" width="1.4" height="7" fill="#cfcfcf"/><rect x="1412.2" y="16" width="1.4" height="7" fill="#cfcfcf"/><rect x="1420.0" y="16" width="1.4" height="7" fill="#cfcfcf"/><rect x="1427.9" y="16" width="1.4" height="7" fill="#cfcfcf"/><rect x="1435.8" y="0" width="1.4" height="23" fill="#9a9a9a"/><rect x="1443.7" y="16" width="1.4" height="7" fill="#cfcfcf"/><rect x="1451.6" y="16" width="1.4" height="7" fill="#cfcfcf"/><rect x="1459.5" y="16" width="1.4" height="7" fill="#cfcfcf"/><rect x="1467.4" y="16" width="1.4" height="7" fill="#cfcfcf"/><rect x="1475.3" y="16" width="1.4" height="7" fill="#cfcfcf"/><rect x="1483.1" y="16" width="1.4" height="7" fill="#cfcfcf"/><rect x="1491.0" y="16" width="1.4" height="7" fill="#cfcfcf"/><rect x="1498.9" y="16" width="1.4" height="7" fill="#cfcfcf"/><rect x="1506.8" y="16" width="1.4" height="7" fill="#cfcfcf"/><rect x="1514.7" y="0" width="1.4" height="23" fill="#9a9a9a"/><rect x="1522.6" y="16" width="1.4" height="7" fill="#cfcfcf"/><rect x="1530.5" y="16" width="1.4" height="7" fill="#cfcfcf"/><rect x="1538.4" y="16" width="1.4" height="7" fill="#cfcfcf"/><rect x="1546.3" y="16" width="1.4" height="7" fill="#cfcfcf"/><rect x="1554.1" y="16" width="1.4" height="7" fill="#cfcfcf"/><rect x="1562.0" y="16" width="1.4" height="7" fill="#cfcfcf"/><rect x="1569.9" y="16" width="1.4" height="7" fill="#cfcfcf"/><rect x="1577.8" y="16" width="1.4" height="7" fill="#cfcfcf"/><rect x="1585.7" y="16" width="1.4" height="7" fill="#cfcfcf"/><rect x="1593.6" y="0" width="1.4" height="23" fill="#9a9a9a"/><rect x="1601.5" y="16" width="1.4" height="7" fill="#cfcfcf"/><rect x="1609.4" y="16" width="1.4" height="7" fill="#cfcfcf"/><rect x="1617.2" y="16" width="1.4" height="7" fill="#cfcfcf"/><rect x="1625.1" y="16" width="1.4" height="7" fill="#cfcfcf"/><rect x="1633.0" y="16" width="1.4" height="7" fill="#cfcfcf"/><rect x="1640.9" y="16" width="1.4" height="7" fill="#cfcfcf"/><rect x="1648.8" y="16" width="1.4" height="7" fill="#cfcfcf"/><rect x="1656.7" y="16" width="1.4" height="7" fill="#cfcfcf"/><rect x="1664.6" y="16" width="1.4" height="7" fill="#cfcfcf"/><rect x="1672.5" y="0" width="1.4" height="23" fill="#9a9a9a"/><rect x="1680.3" y="16" width="1.4" height="7" fill="#cfcfcf"/><rect x="1688.2" y="16" width="1.4" height="7" fill="#cfcfcf"/><rect x="1696.1" y="16" width="1.4" height="7" fill="#cfcfcf"/><rect x="1704.0" y="16" width="1.4" height="7" fill="#cfcfcf"/><rect x="1711.9" y="16" width="1.4" height="7" fill="#cfcfcf"/><rect x="1719.8" y="16" width="1.4" height="7" fill="#cfcfcf"/><rect x="1727.7" y="16" width="1.4" height="7" fill="#cfcfcf"/><rect x="1735.6" y="16" width="1.4" height="7" fill="#cfcfcf"/><rect x="1743.5" y="16" width="1.4" height="7" fill="#cfcfcf"/><rect x="1751.3" y="0" width="1.4" height="23" fill="#9a9a9a"/><rect x="1759.2" y="16" width="1.4" height="7" fill="#cfcfcf"/><rect x="1767.1" y="16" width="1.4" height="7" fill="#cfcfcf"/><rect x="1775.0" y="16" width="1.4" height="7" fill="#cfcfcf"/><rect x="1782.9" y="16" width="1.4" height="7" fill="#cfcfcf"/><rect x="1790.8" y="16" width="1.4" height="7" fill="#cfcfcf"/><rect x="1798.7" y="16" width="1.4" height="7" fill="#cfcfcf"/></svg>
<div class="t" style="left:558px;top:160px;font-size:13px;color:#d4d4d4;font-weight:normal;font-family:'Liberation Sans',sans-serif;letter-spacing:-0.2px">400</div>
<div class="t" style="left:637px;top:160px;font-size:13px;color:#d4d4d4;font-weight:normal;font-family:'Liberation Sans',sans-serif;letter-spacing:-0.2px">300</div>
<div class="t" style="left:716px;top:160px;font-size:13px;color:#d4d4d4;font-weight:normal;font-family:'Liberation Sans',sans-serif;letter-spacing:-0.2px">200</div>
<div class="t" style="left:795px;top:160px;font-size:13px;color:#d4d4d4;font-weight:normal;font-family:'Liberation Sans',sans-serif;letter-spacing:-0.2px">100</div>
<div class="t" style="left:874px;top:160px;font-size:13px;color:#d4d4d4;font-weight:normal;font-family:'Liberation Sans',sans-serif;letter-spacing:-0.2px">0</div>
<div class="t" style="left:952px;top:160px;font-size:13px;color:#d4d4d4;font-weight:normal;font-family:'Liberation Sans',sans-serif;letter-spacing:-0.2px">100</div>
<div class="t" style="left:1031px;top:160px;font-size:13px;color:#d4d4d4;font-weight:normal;font-family:'Liberation Sans',sans-serif;letter-spacing:-0.2px">200</div>
<div class="t" style="left:1110px;top:160px;font-size:13px;color:#d4d4d4;font-weight:normal;font-family:'Liberation Sans',sans-serif;letter-spacing:-0.2px">300</div>
<div class="t" style="left:1189px;top:160px;font-size:13px;color:#d4d4d4;font-weight:normal;font-family:'Liberation Sans',sans-serif;letter-spacing:-0.2px">400</div>
<div class="t" style="left:1268px;top:160px;font-size:13px;color:#d4d4d4;font-weight:normal;font-family:'Liberation Sans',sans-serif;letter-spacing:-0.2px">500</div>
<div class="t" style="left:1347px;top:160px;font-size:13px;color:#d4d4d4;font-weight:normal;font-family:'Liberation Sans',sans-serif;letter-spacing:-0.2px">600</div>
<div class="t" style="left:1426px;top:160px;font-size:13px;color:#d4d4d4;font-weight:normal;font-family:'Liberation Sans',sans-serif;letter-spacing:-0.2px">700</div>
<div class="t" style="left:1505px;top:160px;font-size:13px;color:#d4d4d4;font-weight:normal;font-family:'Liberation Sans',sans-serif;letter-spacing:-0.2px">800</div>
<div class="t" style="left:1583px;top:160px;font-size:13px;color:#d4d4d4;font-weight:normal;font-family:'Liberation Sans',sans-serif;letter-spacing:-0.2px">900</div>
<div class="t" style="left:1662px;top:160px;font-size:13px;color:#d4d4d4;font-weight:normal;font-family:'Liberation Sans',sans-serif;letter-spacing:-0.2px">1000</div>
<div class="t" style="left:1741px;top:160px;font-size:13px;color:#d4d4d4;font-weight:normal;font-family:'Liberation Sans',sans-serif;letter-spacing:-0.2px">1100</div>
<div class="t" style="left:1820px;top:160px;font-size:13px;color:#d4d4d4;font-weight:normal;font-family:'Liberation Sans',sans-serif;letter-spacing:-0.2px">1200</div>
<div class="t" style="left:1899px;top:160px;font-size:13px;color:#d4d4d4;font-weight:normal;font-family:'Liberation Sans',sans-serif;letter-spacing:-0.2px">1300</div>
<div class="t" style="left:1978px;top:160px;font-size:13px;color:#d4d4d4;font-weight:normal;font-family:'Liberation Sans',sans-serif;letter-spacing:-0.2px">1400</div>
<div class="t" style="left:2057px;top:160px;font-size:13px;color:#d4d4d4;font-weight:normal;font-family:'Liberation Sans',sans-serif;letter-spacing:-0.2px">1500</div>
<div class="t" style="left:2136px;top:160px;font-size:13px;color:#d4d4d4;font-weight:normal;font-family:'Liberation Sans',sans-serif;letter-spacing:-0.2px">1600</div>
<div class="t" style="left:2214px;top:160px;font-size:13px;color:#d4d4d4;font-weight:normal;font-family:'Liberation Sans',sans-serif;letter-spacing:-0.2px">1700</div>
<div class="t" style="left:2293px;top:160px;font-size:13px;color:#d4d4d4;font-weight:normal;font-family:'Liberation Sans',sans-serif;letter-spacing:-0.2px">1800</div>
<svg class="a" style="left:514px;top:187px" width="23" height="764"><rect x="16" y="7.5" width="7" height="1.4" fill="#cfcfcf"/><rect x="16" y="15.4" width="7" height="1.4" fill="#cfcfcf"/><rect x="16" y="23.3" width="7" height="1.4" fill="#cfcfcf"/><rect x="16" y="31.2" width="7" height="1.4" fill="#cfcfcf"/><rect x="16" y="39.1" width="7" height="1.4" fill="#cfcfcf"/><rect x="16" y="47.0" width="7" height="1.4" fill="#cfcfcf"/><rect x="16" y="54.8" width="7" height="1.4" fill="#cfcfcf"/><rect x="16" y="62.7" width="7" height="1.4" fill="#cfcfcf"/><rect x="0" y="70.6" width="23" height="1.4" fill="#9a9a9a"/><rect x="16" y="78.5" width="7" height="1.4" fill="#cfcfcf"/><rect x="16" y="86.4" width="7" height="1.4" fill="#cfcfcf"/><rect x="16" y="94.3" width="7" height="1.4" fill="#cfcfcf"/><rect x="16" y="102.2" width="7" height="1.4" fill="#cfcfcf"/><rect x="16" y="110.1" width="7" height="1.4" fill="#cfcfcf"/><rect x="16" y="117.9" width="7" height="1.4" fill="#cfcfcf"/><rect x="16" y="125.8" width="7" height="1.4" fill="#cfcfcf"/><rect x="16" y="133.7" width="7" height="1.4" fill="#cfcfcf"/><rect x="16" y="141.6" width="7" height="1.4" fill="#cfcfcf"/><rect x="0" y="149.5" width="23" height="1.4" fill="#9a9a9a"/><rect x="16" y="157.4" width="7" height="1.4" fill="#cfcfcf"/><rect x="16" y="165.3" width="7" height="1.4" fill="#cfcfcf"/><rect x="16" y="173.2" width="7" height="1.4" fill="#cfcfcf"/><rect x="16" y="181.1" width="7" height="1.4" fill="#cfcfcf"/><rect x="16" y="188.9" width="7" height="1.4" fill="#cfcfcf"/><rect x="16" y="196.8" width="7" height="1.4" fill="#cfcfcf"/><rect x="16" y="204.7" width="7" height="1.4" fill="#cfcfcf"/><rect x="16" y="212.6" width="7" height="1.4" fill="#cfcfcf"/><rect x="16" y="220.5" width="7" height="1.4" fill="#cfcfcf"/><rect x="0" y="228.4" width="23" height="1.4" fill="#9a9a9a"/><rect x="16" y="236.3" width="7" height="1.4" fill="#cfcfcf"/><rect x="16" y="244.2" width="7" height="1.4" fill="#cfcfcf"/><rect x="16" y="252.0" width="7" height="1.4" fill="#cfcfcf"/><rect x="16" y="259.9" width="7" height="1.4" fill="#cfcfcf"/><rect x="16" y="267.8" width="7" height="1.4" fill="#cfcfcf"/><rect x="16" y="275.7" width="7" height="1.4" fill="#cfcfcf"/><rect x="16" y="283.6" width="7" height="1.4" fill="#cfcfcf"/><rect x="16" y="291.5" width="7" height="1.4" fill="#cfcfcf"/><rect x="16" y="299.4" width="7" height="1.4" fill="#cfcfcf"/><rect x="0" y="307.3" width="23" height="1.4" fill="#9a9a9a"/><rect x="16" y="315.1" width="7" height="1.4" fill="#cfcfcf"/><rect x="16" y="323.0" width="7" height="1.4" fill="#cfcfcf"/><rect x="16" y="330.9" width="7" height="1.4" fill="#cfcfcf"/><rect x="16" y="338.8" width="7" height="1.4" fill="#cfcfcf"/><rect x="16" y="346.7" width="7" height="1.4" fill="#cfcfcf"/><rect x="16" y="354.6" width="7" height="1.4" fill="#cfcfcf"/><rect x="16" y="362.5" width="7" height="1.4" fill="#cfcfcf"/><rect x="16" y="370.4" width="7" height="1.4" fill="#cfcfcf"/><rect x="16" y="378.3" width="7" height="1.4" fill="#cfcfcf"/><rect x="0" y="386.1" width="23" height="1.4" fill="#9a9a9a"/><rect x="16" y="394.0" width="7" height="1.4" fill="#cfcfcf"/><rect x="16" y="401.9" width="7" height="1.4" fill="#cfcfcf"/><rect x="16" y="409.8" width="7" height="1.4" fill="#cfcfcf"/><rect x="16" y="417.7" width="7" height="1.4" fill="#cfcfcf"/><rect x="16" y="425.6" width="7" height="1.4" fill="#cfcfcf"/><rect x="16" y="433.5" width="7" height="1.4" fill="#cfcfcf"/><rect x="16" y="441.4" width="7" height="1.4" fill="#cfcfcf"/><rect x="16" y="449.2" width="7" height="1.4" fill="#cfcfcf"/><rect x="16" y="457.1" width="7" height="1.4" fill="#cfcfcf"/><rect x="0" y="465.0" width="23" height="1.4" fill="#9a9a9a"/><rect x="16" y="472.9" width="7" height="1.4" fill="#cfcfcf"/><rect x="16" y="480.8" width="7" height="1.4" fill="#cfcfcf"/><rect x="16" y="488.7" width="7" height="1.4" fill="#cfcfcf"/><rect x="16" y="496.6" width="7" height="1.4" fill="#cfcfcf"/><rect x="16" y="504.5" width="7" height="1.4" fill="#cfcfcf"/><rect x="16" y="512.3" width="7" height="1.4" fill="#cfcfcf"/><rect x="16" y="520.2" width="7" height="1.4" fill="#cfcfcf"/><rect x="16" y="528.1" width="7" height="1.4" fill="#cfcfcf"/><rect x="16" y="536.0" width="7" height="1.4" fill="#cfcfcf"/><rect x="0" y="543.9" width="23" height="1.4" fill="#9a9a9a"/><rect x="16" y="551.8" width="7" height="1.4" fill="#cfcfcf"/><rect x="16" y="559.7" width="7" height="1.4" fill="#cfcfcf"/><rect x="16" y="567.6" width="7" height="1.4" fill="#cfcfcf"/><rect x="16" y="575.5" width="7" height="1.4" fill="#cfcfcf"/><rect x="16" y="583.3" width="7" height="1.4" fill="#cfcfcf"/><rect x="16" y="591.2" width="7" height="1.4" fill="#cfcfcf"/><rect x="16" y="599.1" width="7" height="1.4" fill="#cfcfcf"/><rect x="16" y="607.0" width="7" height="1.4" fill="#cfcfcf"/><rect x="16" y="614.9" width="7" height="1.4" fill="#cfcfcf"/><rect x="0" y="622.8" width="23" height="1.4" fill="#9a9a9a"/><rect x="16" y="630.7" width="7" height="1.4" fill="#cfcfcf"/><rect x="16" y="638.6" width="7" height="1.4" fill="#cfcfcf"/><rect x="16" y="646.4" width="7" height="1.4" fill="#cfcfcf"/><rect x="16" y="654.3" width="7" height="1.4" fill="#cfcfcf"/><rect x="16" y="662.2" width="7" height="1.4" fill="#cfcfcf"/><rect x="16" y="670.1" width="7" height="1.4" fill="#cfcfcf"/><rect x="16" y="678.0" width="7" height="1.4" fill="#cfcfcf"/><rect x="16" y="685.9" width="7" height="1.4" fill="#cfcfcf"/><rect x="16" y="693.8" width="7" height="1.4" fill="#cfcfcf"/><rect x="0" y="701.7" width="23" height="1.4" fill="#9a9a9a"/><rect x="16" y="709.5" width="7" height="1.4" fill="#cfcfcf"/><rect x="16" y="717.4" width="7" height="1.4" fill="#cfcfcf"/><rect x="16" y="725.3" width="7" height="1.4" fill="#cfcfcf"/><rect x="16" y="733.2" width="7" height="1.4" fill="#cfcfcf"/><rect x="16" y="741.1" width="7" height="1.4" fill="#cfcfcf"/><rect x="16" y="749.0" width="7" height="1.4" fill="#cfcfcf"/><rect x="16" y="756.9" width="7" height="1.4" fill="#cfcfcf"/></svg>
<div class="t" style="left:524px;top:259px;font-size:11px;color:#e0e0e0;transform-origin:0 0;transform:rotate(90deg);letter-spacing:3px">100</div>
<div class="t" style="left:524px;top:338px;font-size:11px;color:#e0e0e0;transform-origin:0 0;transform:rotate(90deg);letter-spacing:3px">0</div>
<div class="t" style="left:524px;top:416px;font-size:11px;color:#e0e0e0;transform-origin:0 0;transform:rotate(90deg);letter-spacing:3px">100</div>
<div class="t" style="left:524px;top:495px;font-size:11px;color:#e0e0e0;transform-origin:0 0;transform:rotate(90deg);letter-spacing:3px">200</div>
<div class="t" style="left:524px;top:574px;font-size:11px;color:#e0e0e0;transform-origin:0 0;transform:rotate(90deg);letter-spacing:3px">300</div>
<div class="t" style="left:524px;top:653px;font-size:11px;color:#e0e0e0;transform-origin:0 0;transform:rotate(90deg);letter-spacing:3px">400</div>
<div class="t" style="left:524px;top:732px;font-size:11px;color:#e0e0e0;transform-origin:0 0;transform:rotate(90deg);letter-spacing:3px">500</div>
<div class="t" style="left:524px;top:811px;font-size:11px;color:#e0e0e0;transform-origin:0 0;transform:rotate(90deg);letter-spacing:3px">600</div>
<div class="t" style="left:524px;top:890px;font-size:11px;color:#e0e0e0;transform-origin:0 0;transform:rotate(90deg);letter-spacing:3px">700</div>
<div class="a" style="left:514px;top:874px;width:28px;height:1.5px;background:#2f8cf0;"></div>
<div class="a" style="left:1466px;top:160px;width:1.5px;height:24px;background:#4a7fd0;"></div>
<div class="a" style="left:871px;top:336px;width:1009px;height:521px;background:#000;"></div>
<div class="a" style="left:1065px;top:481px;width:221px;height:217px;background:#3fa5a8;filter:blur(6.5px)"></div>
<div class="a" style="left:1492px;top:485px;width:218px;height:213px;background:#3e3fa3;filter:blur(6.5px)"></div>
<div class="a" style="left:514px;top:952px;width:1830px;height:2px;background:#151515;"></div>
<svg class="a" style="left:522px;top:962px" width="22" height="19" viewBox="0 0 22 19"><rect x="1" y="1" width="13" height="10" fill="#bdbdbd"/><path d="M5 3.5 L10 6 L5 8.5Z" fill="#232323"/><path d="M16 4 L16 13 L5 13 M19 7 L19 16 L8 16" stroke="#bdbdbd" stroke-width="1.5" fill="none"/></svg>
<svg class="a" style="left:557px;top:962px" width="20" height="18" viewBox="0 0 20 18"><rect x="1" y="1" width="18" height="12" fill="none" stroke="#bdbdbd" stroke-width="1.8"/><path d="M10 13 L10 16 M5 17 L15 17" stroke="#bdbdbd" stroke-width="1.8"/></svg>
<svg class="a" style="left:588px;top:961px" width="26" height="23" viewBox="0 0 26 23"><path d="M2 3 Q13 0 24 3 L24 11 Q20 14 16 11 L13 9 L10 11 Q6 14 2 11 Z" fill="#bdbdbd"/><circle cx="8" cy="7" r="2.2" fill="#232323"/><circle cx="18" cy="7" r="2.2" fill="#232323"/><path d="M19 18 L25 18 L22 21Z" fill="#bdbdbd"/></svg>
<div class="a" style="left:620px;top:958px;width:108px;height:27px;background:#1e1e1e;border:1px solid #292929;border-radius:3px"></div>
<div class="t" style="left:630px;top:963px;font-size:17px;color:#b8b8b8;font-weight:normal;font-family:'Liberation Sans',sans-serif;">50%</div>
<svg class="a" style="left:708px;top:969px" width="13" height="8" viewBox="0 0 13 8"><path d="M1 1 L6.5 6.5 L12 1" fill="none" stroke="#9a9a9a" stroke-width="1.6"/></svg>
<svg class="a" style="left:734px;top:959px" width="23" height="24" viewBox="0 0 23 24"><rect x="2" y="3" width="18" height="14" fill="none" stroke="#bdbdbd" stroke-width="1.6"/><path d="M11 1 L11 19 M6 10 L16 10" stroke="#bdbdbd" stroke-width="1" stroke-dasharray="2 2"/><path d="M14 20 L20 20 L17 23Z" fill="#bdbdbd"/></svg>
<div class="a" style="left:765px;top:957px;width:32px;height:29px;background:#1a1a1a;border-radius:2px"></div>
<svg class="a" style="left:770px;top:961px" width="22" height="20" viewBox="0 0 22 20"><path d="M5 3 L18 2 L19 18 L2 18 L2 8 Z" fill="none" stroke="#2f8cf0" stroke-width="1.8"/><rect x="3" y="1" width="4" height="4" fill="#2f8cf0"/><rect x="16" y="0" width="4" height="4" fill="#2f8cf0"/><rect x="17" y="16" width="4" height="4" fill="#2f8cf0"/><rect x="0" y="16" width="4" height="4" fill="#2f8cf0"/></svg>
<div class="a" style="left:800px;top:958px;width:107px;height:27px;background:#1e1e1e;border:1px solid #292929;border-radius:3px"></div>
<div class="t" style="left:812px;top:963px;font-size:17px;color:#8a8a8a;font-weight:normal;font-family:'Liberation Sans',sans-serif;letter-spacing:-0.3px">0:00:00:00</div>
<svg class="a" style="left:915px;top:962px" width="22" height="18" viewBox="0 0 22 18"><path d="M1 4 L6 4 L8 1 L14 1 L16 4 L21 4 L21 17 L1 17 Z" fill="#bdbdbd"/><circle cx="11" cy="10" r="4.5" fill="#232323"/><circle cx="11" cy="10" r="2.5" fill="#bdbdbd"/></svg>
<svg class="a" style="left:949px;top:961px" width="24" height="22" viewBox="0 0 24 22"><circle cx="8" cy="14" r="5" fill="none" stroke="#3c3c3c" stroke-width="3"/><circle cx="16" cy="7" r="5" fill="none" stroke="#3c3c3c" stroke-width="2.5"/></svg>
<svg class="a" style="left:985px;top:959px" width="22" height="23" viewBox="0 0 22 23"><circle cx="11" cy="6" r="5" fill="#e8282b"/><circle cx="6.5" cy="13" r="5" fill="#23c03a"/><circle cx="15.5" cy="13" r="5" fill="#2f6ff0"/><path d="M13 19 L19 19 L16 22Z" fill="#bdbdbd"/></svg>
<div class="a" style="left:1015px;top:958px;width:134px;height:27px;background:#1e1e1e;border:1px solid #292929;border-radius:3px"></div>
<div class="t" style="left:1025px;top:963px;font-size:20px;color:#c8c8c8;font-weight:normal;font-family:'Liberation Sans',sans-serif;">完整</div>
<svg class="a" style="left:1129px;top:969px" width="13" height="8" viewBox="0 0 13 8"><path d="M1 1 L6.5 6.5 L12 1" fill="none" stroke="#9a9a9a" stroke-width="1.6"/></svg>
<svg class="a" style="left:1156px;top:962px" width="22" height="19" viewBox="0 0 22 19"><rect x="1" y="1" width="20" height="17" fill="none" stroke="#bdbdbd" stroke-width="2"/><rect x="5" y="6" width="12" height="7" fill="#bdbdbd"/></svg>
<svg class="a" style="left:1191px;top:962px" width="22" height="19" viewBox="0 0 22 19"><rect x="0" y="0" width="22" height="19" fill="#8a8a8a"/><rect x="4" y="3" width="5" height="5" fill="#333"/><rect x="13" y="3" width="5" height="5" fill="#333"/><rect x="9" y="8" width="4" height="4" fill="#333"/><rect x="4" y="12" width="5" height="5" fill="#333"/><rect x="13" y="12" width="5" height="5" fill="#333"/></svg>
<div class="a" style="left:1222px;top:958px;width:164px;height:27px;background:#1e1e1e;border:1px solid #292929;border-radius:3px"></div>
<div class="t" style="left:1232px;top:963px;font-size:20px;color:#c8c8c8;font-weight:normal;font-family:'Liberation Sans',sans-serif;">活动摄像机</div>
<svg class="a" style="left:1366px;top:969px" width="13" height="8" viewBox="0 0 13 8"><path d="M1 1 L6.5 6.5 L12 1" fill="none" stroke="#9a9a9a" stroke-width="1.6"/></svg>
<div class="a" style="left:1391px;top:958px;width:109px;height:27px;background:#1e1e1e;border:1px solid #292929;border-radius:3px"></div>
<div class="t" style="left:1401px;top:963px;font-size:19px;color:#c8c8c8;font-weight:normal;font-family:'Liberation Sans',sans-serif;">1 个…</div>
<svg class="a" style="left:1480px;top:969px" width="13" height="8" viewBox="0 0 13 8"><path d="M1 1 L6.5 6.5 L12 1" fill="none" stroke="#9a9a9a" stroke-width="1.6"/></svg>
<svg class="a" style="left:1505px;top:961px" width="26" height="20" viewBox="0 0 26 20"><path d="M2 5 L24 5 M2 5 L6 1 M2 5 L6 9 M24 5 L20 1 M24 5 L20 9" stroke="#bdbdbd" stroke-width="2" fill="none"/><rect x="7" y="9" width="12" height="9" fill="none" stroke="#bdbdbd" stroke-width="2"/></svg>
<div class="a" style="left:1535px;top:957px;width:33px;height:29px;background:#1a1a1a;border-radius:2px"></div>
<svg class="a" style="left:1541px;top:961px" width="22" height="21" viewBox="0 0 22 21"><rect x="1" y="1" width="20" height="15" fill="none" stroke="#bdbdbd" stroke-width="2"/><path d="M12 3 L7 10 L11 10 L9 15 L15 8 L11 8 Z" fill="#bdbdbd"/><path d="M14 17 L20 17 L17 21Z" fill="#bdbdbd"/></svg>
<svg class="a" style="left:1577px;top:961px" width="22" height="18" viewBox="0 0 22 18"><rect x="8" y="1" width="6" height="6" fill="#bdbdbd"/><path d="M1 5 L1 17 L21 17 L21 5 M6 11 L6 17 M11 8 L11 17 M16 11 L16 17" stroke="#bdbdbd" stroke-width="2" fill="none"/></svg>
<svg class="a" style="left:1610px;top:961px" width="22" height="20" viewBox="0 0 22 20"><rect x="8" y="1" width="6" height="5" fill="#bdbdbd"/><rect x="1" y="13" width="6" height="6" fill="#bdbdbd"/><rect x="15" y="13" width="6" height="6" fill="#bdbdbd"/><rect x="8" y="13" width="6" height="6" fill="#bdbdbd"/><path d="M11 6 L11 13 M4 13 L4 9 L18 9 L18 13" stroke="#bdbdbd" stroke-width="1.6" fill="none"/></svg>
<div class="a" style="left:1640px;top:957px;width:2px;height:28px;background:#2c2c2c;"></div>
<svg class="a" style="left:1650px;top:961px" width="21" height="21" viewBox="0 0 21 21"><circle cx="10.5" cy="10.5" r="9" fill="#bdbdbd"/><circle cx="10.5" cy="10.5" r="4" fill="#232323"/><path d="M10.5 1.5 L12 8 M19.5 10.5 L13 12 M10.5 19.5 L9 13 M1.5 10.5 L8 9" stroke="#232323" stroke-width="1.5"/></svg>
<div class="t" style="left:1680px;top:963px;font-size:18px;color:#2d8ceb;font-weight:normal;font-family:'Liberation Sans',sans-serif;letter-spacing:-0.5px">+0.0</div>
<div class="a" style="left:2352px;top:76px;width:327px;height:913px;background:#232323;"></div>
<div class="t" style="left:2373px;top:86px;font-size:20px;color:#a8a8a8;font-weight:normal;font-family:'Liberation Sans',sans-serif;letter-spacing:1.6px">效果和预设</div>
<svg class="a" style="left:2493px;top:93px" width="15" height="13" viewBox="0 0 15 13"><path d="M1 1.5 L14 1.5 M1 6.5 L14 6.5 M1 11.5 L14 11.5" stroke="#c8c8c8" stroke-width="2"/></svg>
<div class="a" style="left:2361px;top:124px;width:307px;height:31px;background:#141414;border:1px solid #2a2a2a;border-radius:4px"></div>
<svg class="a" style="left:2371px;top:129px" width="28" height="22" viewBox="0 0 28 22"><circle cx="11" cy="8" r="6" fill="none" stroke="#2f8cf0" stroke-width="2.2"/><path d="M7 12 L1 19" stroke="#2f8cf0" stroke-width="2.5"/><path d="M17 12 L27 12 L22 17Z" fill="#2f8cf0"/></svg>
<div class="t" style="left:2404px;top:127px;font-size:20px;color:#e0e0e0;font-weight:normal;font-family:'Liberation Sans',sans-serif;">高斯模糊</div>
<svg class="a" style="left:2649px;top:134px" width="14" height="14" viewBox="0 0 14 14"><path d="M2 2 L12 12 M12 2 L2 12" stroke="#d8d8d8" stroke-width="2.6"/></svg>
<div class="a" style="left:2356px;top:158px;width:320px;height:3px;background:#111;"></div>
<div class="a" style="left:2356px;top:161px;width:292px;height:26px;background:#222222;"></div>
<div class="a" style="left:2356px;top:187px;width:292px;height:1px;background:#2a2a2a;"></div>
<div class="a" style="left:2356px;top:188px;width:292px;height:26px;background:#222222;"></div>
<div class="a" style="left:2356px;top:214px;width:292px;height:1px;background:#2a2a2a;"></div>
<div class="a" style="left:2356px;top:215px;width:292px;height:26px;background:#222222;"></div>
<div class="a" style="left:2356px;top:241px;width:292px;height:1px;background:#2a2a2a;"></div>
<div class="a" style="left:2356px;top:242px;width:292px;height:26px;background:#222222;"></div>
<div class="a" style="left:2356px;top:268px;width:292px;height:1px;background:#2a2a2a;"></div>
<div class="a" style="left:2356px;top:269px;width:292px;height:26px;background:#222222;"></div>
<div class="a" style="left:2356px;top:295px;width:292px;height:1px;background:#2a2a2a;"></div>
<div class="a" style="left:2356px;top:296px;width:292px;height:26px;background:#222222;"></div>
<div class="a" style="left:2356px;top:322px;width:292px;height:1px;background:#2a2a2a;"></div>
<svg class="a" style="left:2363px;top:170px" width="12" height="8" viewBox="0 0 12 8"><path d="M1 1 L6 6 L11 1" fill="none" stroke="#9a9a9a" stroke-width="1.6"/></svg>
<div class="t" style="left:2378px;top:164px;font-size:15px;color:#a0a0a0;font-weight:normal;font-family:'Liberation Sans',sans-serif;letter-spacing:1px">BCC 模糊</div>
<svg class="a" style="left:2407px;top:191px" width="20" height="19" viewBox="0 0 20 19"><path d="M0 4 L4 4 L4 1 L7 1 L7 4 L13 4 L13 1 L16 1 L16 4 L20 4 L20 19 L0 19 Z" fill="#c8c8c8"/><text x="10" y="16.5" font-size="11" font-family="Liberation Sans" font-weight="bold" text-anchor="middle" fill="#232323">32</text></svg>
<div class="t" style="left:2436px;top:191px;font-size:16px;color:#a0a0a0;font-weight:normal;font-family:'Liberation Sans',sans-serif;letter-spacing:1.5px">BCC&nbsp;&nbsp;高斯模糊</div>
<svg class="a" style="left:2363px;top:224px" width="12" height="8" viewBox="0 0 12 8"><path d="M1 1 L6 6 L11 1" fill="none" stroke="#9a9a9a" stroke-width="1.6"/></svg>
<div class="t" style="left:2378px;top:218px;font-size:16px;color:#a0a0a0;font-weight:normal;font-family:'Liberation Sans',sans-serif;letter-spacing:1.6px">模糊和锐化</div>
<div class="a" style="left:2356px;top:242px;width:292px;height:26px;background:#3a3a3a;"></div>
<svg class="a" style="left:2407px;top:245px" width="20" height="19" viewBox="0 0 20 19"><path d="M0 4 L4 4 L4 1 L7 1 L7 4 L13 4 L13 1 L16 1 L16 4 L20 4 L20 19 L0 19 Z" fill="#c8c8c8"/><text x="10" y="16.5" font-size="11" font-family="Liberation Sans" font-weight="bold" text-anchor="middle" fill="#232323">32</text></svg>
<svg class="a" style="left:2436px;top:245px" width="20" height="19" viewBox="0 0 20 19"><path d="M0 4 L4 4 L4 1 L7 1 L7 4 L13 4 L13 1 L16 1 L16 4 L20 4 L20 19 L0 19 Z" fill="#c8c8c8"/><path d="M3 9 L8 9 M3 12 L7 12 M2 15 L6 15" stroke="#232323" stroke-width="1.5"/><path d="M10 8 L16 11.5 L10 15 Z" fill="#232323"/></svg>
<div class="a" style="left:2461px;top:242px;width:85px;height:22px;background:#c0c0c0;"></div>
<div class="t" style="left:2466px;top:244px;font-size:16px;color:#3a3a3a;font-weight:normal;font-family:'Liberation Sans',sans-serif;letter-spacing:1px">高斯模糊</div>
<svg class="a" style="left:2363px;top:278px" width="12" height="8" viewBox="0 0 12 8"><path d="M1 1 L6 6 L11 1" fill="none" stroke="#9a9a9a" stroke-width="1.6"/></svg>
<div class="t" style="left:2378px;top:272px;font-size:16px;color:#a0a0a0;font-weight:normal;font-family:'Liberation Sans',sans-serif;">过时</div>
<svg class="a" style="left:2407px;top:300px" width="20" height="19" viewBox="0 0 20 19"><path d="M0 4 L4 4 L4 1 L7 1 L7 4 L13 4 L13 1 L16 1 L16 4 L20 4 L20 19 L0 19 Z" fill="#c8c8c8"/><text x="10" y="16.5" font-size="11" font-family="Liberation Sans" font-weight="bold" text-anchor="middle" fill="#232323">32</text></svg>
<div class="t" style="left:2436px;top:298px;font-size:16px;color:#a0a0a0;font-weight:normal;font-family:'Liberation Sans',sans-serif;letter-spacing:1.8px">高斯模糊（旧版）</div>
<div class="a" style="left:2352px;top:958px;width:296px;height:3px;background:#111;"></div>
<div class="a" style="left:2645px;top:958px;width:3px;height:31px;background:#111;"></div>
<svg class="a" style="left:2618px;top:966px" width="20" height="18" viewBox="0 0 20 18"><path d="M0 0 L20 0 L20 18 L8 18 L0 10 Z" fill="#c8c8c8"/><path d="M0 10 L8 10 L8 18" fill="#555" /></svg>
<div class="a" style="left:2684px;top:76px;width:316px;height:913px;background:#232323;"></div>
<div class="t" style="left:2705px;top:87px;font-size:20px;color:#a8a8a8;font-weight:normal;font-family:'Liberation Sans',sans-serif;letter-spacing:1.6px">信息</div>
<div class="a" style="left:2684px;top:118px;width:316px;height:3px;background:#171717;"></div>
<div class="t" style="left:2705px;top:133px;font-size:20px;color:#a8a8a8;font-weight:normal;font-family:'Liberation Sans',sans-serif;letter-spacing:1.6px">音频</div>
<div class="a" style="left:2684px;top:166px;width:316px;height:3px;background:#171717;"></div>
<div class="t" style="left:2705px;top:180px;font-size:20px;color:#a8a8a8;font-weight:normal;font-family:'Liberation Sans',sans-serif;letter-spacing:1.6px">库</div>
<div class="a" style="left:2684px;top:213px;width:316px;height:3px;background:#171717;"></div>
<div class="t" style="left:2705px;top:231px;font-size:20px;color:#a8a8a8;font-weight:normal;font-family:'Liberation Sans',sans-serif;letter-spacing:1.6px">对齐</div>
<svg class="a" style="left:2978px;top:234px" width="13" height="12" viewBox="0 0 13 12"><path d="M0 1.5 L13 1.5 M0 6 L13 6 M0 10.5 L13 10.5" stroke="#c8c8c8" stroke-width="2"/></svg>
<div class="t" style="left:2695px;top:270px;font-size:19px;color:#8a8a8a;font-weight:normal;font-family:'Liberation Sans',sans-serif;letter-spacing:2.2px">将图层对齐到:</div>
<div class="a" style="left:2831px;top:267px;width:175px;height:29px;background:#262626;border-radius:3px"></div>
<div class="t" style="left:2843px;top:270px;font-size:19px;color:#4a4a4a;font-weight:normal;font-family:'Liberation Sans',sans-serif;">选区</div>
<svg class="a" style="left:2703.0px;top:305px" width="28" height="27" viewBox="0 0 28 27"><path d="M1 0 L1 26" stroke="#5a5a5a" stroke-width="1.5"/><rect x="3" y="4" width="10" height="7" fill="#5a5a5a"/><rect x="3" y="14" width="20" height="7" fill="#5a5a5a"/></svg>
<svg class="a" style="left:2756.5px;top:305px" width="28" height="27" viewBox="0 0 28 27"><path d="M11 0 L11 26" stroke="#5a5a5a" stroke-width="1.5"/><rect x="6" y="4" width="10" height="7" fill="#5a5a5a"/><rect x="1" y="14" width="20" height="7" fill="#5a5a5a"/></svg>
<svg class="a" style="left:2810.0px;top:305px" width="28" height="27" viewBox="0 0 28 27"><path d="M23 0 L23 26" stroke="#5a5a5a" stroke-width="1.5"/><rect x="11" y="4" width="10" height="7" fill="#5a5a5a"/><rect x="1" y="14" width="20" height="7" fill="#5a5a5a"/></svg>
<svg class="a" style="left:2863.5px;top:305px" width="28" height="27" viewBox="0 0 28 27"><path d="M0 1 L27 1" stroke="#5a5a5a" stroke-width="1.5"/><rect x="4" y="3" width="7" height="22" fill="#5a5a5a"/><rect x="15" y="3" width="7" height="11" fill="#5a5a5a"/></svg>
<svg class="a" style="left:2917.0px;top:305px" width="28" height="27" viewBox="0 0 28 27"><path d="M0 13 L27 13" stroke="#5a5a5a" stroke-width="1.5"/><rect x="4" y="2" width="7" height="22" fill="#5a5a5a"/><rect x="15" y="7" width="7" height="11" fill="#5a5a5a"/></svg>
<svg class="a" style="left:2970.5px;top:305px" width="28" height="27" viewBox="0 0 28 27"><path d="M0 25 L27 25" stroke="#5a5a5a" stroke-width="1.5"/><rect x="4" y="2" width="7" height="22" fill="#5a5a5a"/><rect x="15" y="12" width="7" height="11" fill="#5a5a5a"/></svg>
<div class="a" style="left:2693px;top:339px;width:307px;height:2px;background:#2e2e2e;"></div>
<div class="t" style="left:2695px;top:347px;font-size:19px;color:#8a8a8a;font-weight:normal;font-family:'Liberation Sans',sans-serif;letter-spacing:2.2px">分布图层:</div>
<svg class="a" style="left:2703.0px;top:374px" width="28" height="27" viewBox="0 0 28 27"><path d="M0 1 L27 1 M0 13 L27 13" stroke="#5a5a5a" stroke-width="1.5"/><rect x="6" y="4" width="14" height="6" fill="#5a5a5a"/><rect x="6" y="18" width="14" height="7" fill="#5a5a5a"/></svg>
<svg class="a" style="left:2756.5px;top:374px" width="28" height="27" viewBox="0 0 28 27"><path d="M0 6 L27 6 M0 19 L27 19" stroke="#5a5a5a" stroke-width="1.5"/><rect x="6" y="2" width="14" height="7" fill="#5a5a5a"/><rect x="6" y="16" width="14" height="7" fill="#5a5a5a"/></svg>
<svg class="a" style="left:2810.0px;top:374px" width="28" height="27" viewBox="0 0 28 27"><path d="M0 12 L27 12 M0 25 L27 25" stroke="#5a5a5a" stroke-width="1.5"/><rect x="6" y="2" width="14" height="7" fill="#5a5a5a"/><rect x="6" y="15" width="14" height="7" fill="#5a5a5a"/></svg>
<svg class="a" style="left:2863.5px;top:374px" width="28" height="27" viewBox="0 0 28 27"><path d="M1 0 L1 27 M14 0 L14 27" stroke="#5a5a5a" stroke-width="1.5"/><rect x="3" y="5" width="7" height="17" fill="#5a5a5a"/><rect x="17" y="8" width="6" height="11" fill="#5a5a5a"/></svg>
<svg class="a" style="left:2917.0px;top:374px" width="28" height="27" viewBox="0 0 28 27"><path d="M6 0 L6 27 M20 0 L20 27" stroke="#5a5a5a" stroke-width="1.5"/><rect x="2" y="5" width="7" height="17" fill="#5a5a5a"/><rect x="16" y="8" width="7" height="11" fill="#5a5a5a"/></svg>
<svg class="a" style="left:2970.5px;top:374px" width="28" height="27" viewBox="0 0 28 27"><path d="M12 0 L12 27 M26 0 L26 27" stroke="#5a5a5a" stroke-width="1.5"/><rect x="2" y="5" width="7" height="17" fill="#5a5a5a"/><rect x="16" y="8" width="7" height="11" fill="#5a5a5a"/></svg>
<div class="a" style="left:2684px;top:424px;width:316px;height:3px;background:#171717;"></div>
<div class="t" style="left:2705px;top:439px;font-size:20px;color:#a8a8a8;font-weight:normal;font-family:'Liberation Sans',sans-serif;letter-spacing:1.8px">跟踪器</div>
<div class="a" style="left:2684px;top:471px;width:316px;height:3px;background:#171717;"></div>
<div class="t" style="left:2705px;top:486px;font-size:20px;color:#a8a8a8;font-weight:normal;font-family:'Liberation Sans',sans-serif;letter-spacing:1.8px">动态草图</div>
<div class="a" style="left:2684px;top:518px;width:316px;height:3px;background:#171717;"></div>
<div class="t" style="left:2705px;top:533px;font-size:20px;color:#a8a8a8;font-weight:normal;font-family:'Liberation Sans',sans-serif;letter-spacing:1.8px">平滑器</div>
<div class="a" style="left:2684px;top:566px;width:316px;height:3px;background:#171717;"></div>
<div class="t" style="left:2705px;top:581px;font-size:20px;color:#a8a8a8;font-weight:normal;font-family:'Liberation Sans',sans-serif;letter-spacing:1.8px">摇摆器</div>
<div class="a" style="left:2684px;top:613px;width:316px;height:3px;background:#171717;"></div>
<div class="t" style="left:2705px;top:628px;font-size:20px;color:#a8a8a8;font-weight:normal;font-family:'Liberation Sans',sans-serif;letter-spacing:1.8px">蒙版插值</div>
<div class="a" style="left:2684px;top:661px;width:316px;height:3px;background:#171717;"></div>
<div class="t" style="left:2705px;top:676px;font-size:20px;color:#a8a8a8;font-weight:normal;font-family:'Liberation Sans',sans-serif;letter-spacing:1.8px">段落</div>
<div class="a" style="left:2684px;top:708px;width:316px;height:3px;background:#171717;"></div>
<div class="t" style="left:2705px;top:723px;font-size:20px;color:#a8a8a8;font-weight:normal;font-family:'Liberation Sans',sans-serif;letter-spacing:1.8px">预览</div>
<div class="a" style="left:2684px;top:755px;width:316px;height:3px;background:#171717;"></div>
<div class="t" style="left:2705px;top:770px;font-size:20px;color:#a8a8a8;font-weight:normal;font-family:'Liberation Sans',sans-serif;letter-spacing:1.8px">字符</div>
<div class="a" style="left:2684px;top:803px;width:316px;height:3px;background:#171717;"></div>
<div class="a" style="left:0px;top:996px;width:3000px;height:551px;background:#232323;"></div>
<div class="a" style="left:0px;top:996px;width:3000px;height:2px;background:#2d8ceb;"></div>
<div class="a" style="left:2px;top:996px;width:2px;height:551px;background:#2d8ceb;"></div>
<div class="t" style="left:47px;top:1006px;font-size:20px;color:#a0a0a0;font-weight:normal;font-family:'Liberation Sans',sans-serif;letter-spacing:1px">渲染队列</div>
<div class="a" style="left:214px;top:1008px;width:17px;height:16px;background:#c3ad87;"></div>
<div class="t" style="left:249px;top:1007px;font-size:18px;color:#8a8a8a;font-weight:normal;font-family:'Liberation Sans',sans-serif;letter-spacing:-0.5px">12.width</div>
<div class="t" style="left:319px;top:1006px;font-size:20px;color:#8a8a8a;font-weight:normal;font-family:'Liberation Sans',sans-serif;">与</div>
<div class="t" style="left:343px;top:1007px;font-size:18px;color:#8a8a8a;font-weight:normal;font-family:'Liberation Sans',sans-serif;letter-spacing:-0.5px">height</div>
<div class="t" style="left:392px;top:1006px;font-size:20px;color:#8a8a8a;font-weight:normal;font-family:'Liberation Sans',sans-serif;">表达式</div>
<svg class="a" style="left:514px;top:1012px" width="10" height="9" viewBox="0 0 10 9"><path d="M1 1 L9 8 M9 1 L1 8" stroke="#8a8a8a" stroke-width="1.6"/></svg>
<div class="a" style="left:537px;top:1008px;width:17px;height:16px;background:#c3ad87;"></div>
<div class="t" style="left:572px;top:1007px;font-size:18px;color:#b8b8b8;font-weight:normal;font-family:'Liberation Sans',sans-serif;letter-spacing:-0.6px">13.param</div>
<div class="t" style="left:648px;top:1006px;font-size:20px;color:#b8b8b8;font-weight:normal;font-family:'Liberation Sans',sans-serif;">表达式</div>
<svg class="a" style="left:725px;top:1012px" width="15" height="13" viewBox="0 0 15 13"><path d="M1 1.5 L14 1.5 M1 6.5 L14 6.5 M1 11.5 L14 11.5" stroke="#c8c8c8" stroke-width="2"/></svg>
<div class="a" style="left:514px;top:1034px;width:226px;height:4px;background:#c8c8c8;border-radius:2px"></div>
<div class="t" style="left:40px;top:1047px;font-size:22px;color:#2d8ceb;font-weight:bold;font-family:'Liberation Sans',sans-serif;letter-spacing:1px">0:00:00:00</div>
<div class="t" style="left:18px;top:1072px;font-size:15.5px;color:#2563b5;font-weight:normal;font-family:'Liberation Mono',monospace;letter-spacing:0px">00000 (25.00 fps)</div>
<div class="a" style="left:195px;top:1052px;width:591px;height:30px;background:#151515;border:1px solid #292929;border-radius:4px"></div>
<svg class="a" style="left:204px;top:1058px" width="26" height="20" viewBox="0 0 26 20"><circle cx="12" cy="7" r="5.5" fill="none" stroke="#b8b8b8" stroke-width="2"/><path d="M8 11 L2 17" stroke="#b8b8b8" stroke-width="2.4"/><path d="M16 12 L24 12 L20 16Z" fill="#b8b8b8"/></svg>
<svg class="a" style="left:811px;top:1057px" width="28" height="22" viewBox="0 0 28 22"><path d="M1 4 L10 4 M4 4 L4 4" stroke="#bdbdbd" stroke-width="2.4"/><rect x="5" y="2" width="5" height="4" fill="#bdbdbd"/><path d="M10 4 L14 4 M14 4 L14 14 L19 14" stroke="#bdbdbd" stroke-width="1.4" fill="none"/><rect x="17" y="1" width="8" height="6" fill="#bdbdbd"/><rect x="17" y="11" width="8" height="6" fill="#bdbdbd"/><path d="M21 18 L26 18 L23.5 21Z" fill="#bdbdbd"/></svg>
<svg class="a" style="left:863px;top:1053px" width="28" height="28" viewBox="0 0 28 28"><circle cx="8" cy="8" r="4" fill="#bdbdbd"/><path d="M8 0 L8 16 M0 8 L16 8 M2.5 2.5 L13.5 13.5 M13.5 2.5 L2.5 13.5" stroke="#bdbdbd" stroke-width="1.2"/><path d="M18 10 L26 14 L26 23 L18 27 L10 23 L10 14 Z M10 14 L18 18 L26 14 M18 18 L18 27" fill="none" stroke="#bdbdbd" stroke-width="1.8"/></svg>
<svg class="a" style="left:918px;top:1057px" width="26" height="20" viewBox="0 0 26 20"><path d="M13 1 Q20 1 21 8 L5 8 Q6 1 13 1Z" fill="#bdbdbd"/><rect x="11" y="8" width="4" height="8" fill="#bdbdbd"/><rect x="1" y="11" width="24" height="8" fill="#8a8a8a"/><rect x="11" y="11" width="4" height="6" fill="#bdbdbd"/></svg>
<svg class="a" style="left:960px;top:1055px" width="24" height="24" viewBox="0 0 24 24"><rect x="8" y="1" width="15" height="17" fill="#bdbdbd"/><rect x="11" y="8" width="8" height="2" fill="#232323"/><path d="M9 3 L9 16 M22 3 L22 16" stroke="#232323" stroke-width="1" stroke-dasharray="1.5 1.5"/><path d="M5 5 L5 22 L18 22" fill="none" stroke="#bdbdbd" stroke-width="2"/><path d="M2 8 L2 23" stroke="#bdbdbd" stroke-width="1.5"/></svg>
<svg class="a" style="left:1002px;top:1055px" width="23" height="23" viewBox="0 0 23 23"><circle cx="14" cy="9" r="8" fill="#8a8a8a" stroke="#bdbdbd" stroke-width="1.2"/><path d="M5 12 A8 8 0 0 0 13 21 M2 15 A8 8 0 0 0 10 23" fill="none" stroke="#bdbdbd" stroke-width="1.6"/></svg>
<svg class="a" style="left:1054px;top:1053px" width="27" height="26" viewBox="0 0 27 26"><rect x="1.5" y="4" width="24" height="20" fill="none" stroke="#bdbdbd" stroke-width="2"/><path d="M6 1 L6 4 M11 1 L11 4 M16 1 L16 4 M21 1 L21 4" stroke="#bdbdbd" stroke-width="1.5"/><path d="M5 9 Q9 8 12 13 Q15 19 21 19" fill="none" stroke="#bdbdbd" stroke-width="1.5"/></svg>
<div class="a" style="left:4px;top:1096px;width:1100px;height:29px;background:#2e2e2e;"></div>
<div class="a" style="left:4px;top:1125px;width:1100px;height:2px;background:#0e0e0e;"></div>
<svg class="a" style="left:12px;top:1106px" width="18" height="12" viewBox="0 0 18 12"><path d="M1 6 Q9 -2 17 6 Q9 14 1 6Z" fill="#bdbdbd"/><circle cx="9" cy="6" r="3" fill="#2e2e2e"/><circle cx="9" cy="6" r="1.5" fill="#bdbdbd"/></svg>
<svg class="a" style="left:34px;top:1103px" width="19" height="19" viewBox="0 0 19 19"><path d="M1 6 L5 6 L10 1 L10 18 L5 13 L1 13Z" fill="#bdbdbd"/><path d="M13 4 Q18 9.5 13 15" fill="none" stroke="#bdbdbd" stroke-width="2"/></svg>
<svg class="a" style="left:61px;top:1107px" width="12" height="12" viewBox="0 0 12 12"><circle cx="6" cy="6" r="5.5" fill="#bdbdbd"/></svg>
<svg class="a" style="left:84px;top:1103px" width="15" height="18" viewBox="0 0 15 18"><path d="M3.5 8 L3.5 5 A4 4 0 0 1 11.5 5 L11.5 8" fill="none" stroke="#bdbdbd" stroke-width="2.2"/><rect x="1" y="8" width="13" height="10" fill="#bdbdbd"/><rect x="6.5" y="11" width="2" height="4" fill="#2e2e2e"/></svg>
<div class="a" style="left:109px;top:1104px;width:2px;height:17px;background:#101010;"></div>
<div class="a" style="left:159px;top:1104px;width:2px;height:17px;background:#101010;"></div>
<div class="a" style="left:211px;top:1104px;width:2px;height:17px;background:#101010;"></div>
<div class="a" style="left:416px;top:1104px;width:2px;height:17px;background:#101010;"></div>
<div class="a" style="left:633px;top:1104px;width:2px;height:17px;background:#101010;"></div>
<div class="a" style="left:894px;top:1104px;width:2px;height:17px;background:#101010;"></div>
<div class="a" style="left:1079px;top:1104px;width:2px;height:17px;background:#101010;"></div>
<svg class="a" style="left:131px;top:1103px" width="20" height="20" viewBox="0 0 20 20"><path d="M1 1 L10 1 L19 10 L10 19 L1 10Z" fill="#bdbdbd"/><circle cx="5" cy="5" r="1.5" fill="#2e2e2e"/></svg>
<div class="t" style="left:171px;top:1105px;font-size:16px;color:#8a8a8a;font-weight:normal;font-family:'Liberation Sans',sans-serif;">#</div>
<div class="t" style="left:224px;top:1100px;font-size:20px;color:#b8b8b8;font-weight:normal;font-family:'Liberation Sans',sans-serif;letter-spacing:1px">源名称</div>
<svg class="a" style="left:424px;top:1104px" width="20" height="18" viewBox="0 0 20 18"><path d="M4 6 Q10 -1 16 6 Z" fill="#bdbdbd"/><rect x="3" y="5" width="14" height="5" fill="#bdbdbd"/><path d="M10 3 L10 17 M1 13 L19 13" stroke="#bdbdbd" stroke-width="2"/><rect x="6" y="6" width="2" height="3" fill="#2a2a2a"/><rect x="12" y="6" width="2" height="3" fill="#2a2a2a"/></svg>
<svg class="a" style="left:450px;top:1104px" width="16" height="16" viewBox="0 0 16 16"><circle cx="8" cy="8" r="3" fill="none" stroke="#bdbdbd" stroke-width="1.6"/><path d="M8 0 L8 4 M8 12 L8 16 M0 8 L4 8 M12 8 L16 8 M2 2 L5 5 M11 11 L14 14 M14 2 L11 5 M5 11 L2 14" stroke="#bdbdbd" stroke-width="1.3"/></svg>
<svg class="a" style="left:473px;top:1104px" width="17" height="17" viewBox="0 0 17 17"><path d="M2 2 L15 15" stroke="#bdbdbd" stroke-width="2.5" stroke-dasharray="2.5 1.5"/></svg>
<div class="t" style="left:497px;top:1100px;font-size:21px;color:#c0c0c0;font-weight:normal;font-family:'Liberation Serif',serif;"><i>fx</i></div>
<svg class="a" style="left:519px;top:1104px" width="20" height="18" viewBox="0 0 20 18"><rect x="3" y="1" width="16" height="15" fill="#bdbdbd"/><rect x="7" y="7" width="8" height="2.5" fill="#2e2e2e"/><path d="M1 3 L1 17 L17 17" fill="none" stroke="#bdbdbd" stroke-width="1.5"/></svg>
<svg class="a" style="left:543px;top:1102px" width="21" height="22" viewBox="0 0 21 22"><circle cx="13" cy="8" r="7.5" fill="#7a7a7a"/><path d="M4 10 A7.5 7.5 0 0 0 12 19 M2 13 A7.5 7.5 0 0 0 10 21" fill="none" stroke="#8a8a8a" stroke-width="1.5"/></svg>
<svg class="a" style="left:568px;top:1104px" width="17" height="17" viewBox="0 0 17 17"><circle cx="8.5" cy="8.5" r="7.5" fill="#bdbdbd"/><path d="M3.2 13.8 A7.5 7.5 0 0 1 13.8 3.2 Z" fill="#2e2e2e"/><circle cx="8.5" cy="8.5" r="7.5" fill="none" stroke="#bdbdbd" stroke-width="1.2"/></svg>
<svg class="a" style="left:592px;top:1103px" width="18" height="19" viewBox="0 0 18 19"><path d="M9 1 L17 5 L17 14 L9 18 L1 14 L1 5 Z M1 5 L9 9 L17 5 M9 9 L9 18" fill="none" stroke="#bdbdbd" stroke-width="1.6"/></svg>
<div class="t" style="left:646px;top:1100px;font-size:20px;color:#b8b8b8;font-weight:normal;font-family:'Liberation Sans',sans-serif;">模式</div>
<div class="t" style="left:762px;top:1104px;font-size:16px;color:#6a7a9a;font-weight:normal;font-family:'Liberation Sans',sans-serif;">T</div>
<div class="t" style="left:790px;top:1103px;font-size:17px;color:#8a8a8a;font-weight:normal;font-family:'Liberation Sans',sans-serif;letter-spacing:-0.3px">TrkMat</div>
<div class="t" style="left:906px;top:1100px;font-size:20px;color:#b8b8b8;font-weight:normal;font-family:'Liberation Sans',sans-serif;letter-spacing:1px">父级和链接</div>
<div class="a" style="left:1104px;top:1047px;width:2px;height:500px;background:#0e0e0e;"></div>
<div class="a" style="left:4px;top:1127px;width:1100px;height:31px;background:#2b2b2b;"></div>
<div class="a" style="left:4px;top:1158px;width:1100px;height:1px;background:#1e1e1e;"></div>
<div class="a" style="left:10px;top:1130px;width:20px;height:21px;background:#1f1f1f;"></div>
<svg class="a" style="left:12px;top:1135px" width="18" height="12" viewBox="0 0 18 12"><path d="M1 6 Q9 -2 17 6 Q9 14 1 6Z" fill="#bdbdbd"/><circle cx="9" cy="6" r="3" fill="#1f1f1f"/><circle cx="9" cy="6" r="1.5" fill="#bdbdbd"/></svg>
<div class="a" style="left:57px;top:1130px;width:20px;height:21px;background:#1f1f1f;"></div>
<div class="a" style="left:80px;top:1130px;width:21px;height:21px;background:#1f1f1f;"></div>
<svg class="a" style="left:120px;top:1140px" width="13" height="8" viewBox="0 0 13 8"><path d="M1 1 L6.5 6.5 L12 1" fill="none" stroke="#9a9a9a" stroke-width="1.6"/></svg>
<div class="a" style="left:137px;top:1130px;width:24px;height:24px;background:#6a7cf0;"></div>
<div class="t" style="left:172px;top:1135px;font-size:17px;color:#c0c0c0;font-weight:bold;font-family:'Liberation Serif',serif;">1</div>
<svg class="a" style="left:221px;top:1133px" width="19" height="18" viewBox="0 0 19 18"><path d="M9.5 0 L12 6.5 L19 7 L13.5 11 L15.5 18 L9.5 14 L3.5 18 L5.5 11 L0 7 L7 6.5Z" fill="#c8c8c8"/></svg>
<div class="t" style="left:252px;top:1135px;font-size:18.5px;color:#c0c0c0;font-weight:bold;font-family:'Liberation Sans',sans-serif;">形状图层</div>
<div class="t" style="left:337px;top:1137px;font-size:17px;color:#c0c0c0;font-weight:bold;font-family:'Liberation Serif',serif;">1</div>
<div class="a" style="left:424px;top:1130px;width:21px;height:21px;background:#1f1f1f;"></div>
<div class="a" style="left:448px;top:1130px;width:21px;height:21px;background:#1f1f1f;"></div>
<div class="a" style="left:472px;top:1130px;width:21px;height:21px;background:#1f1f1f;"></div>
<div class="a" style="left:496px;top:1130px;width:21px;height:21px;background:#1f1f1f;"></div>
<svg class="a" style="left:424px;top:1132px" width="20" height="18" viewBox="0 0 20 18"><path d="M4 6 Q10 -1 16 6 Z" fill="#bdbdbd"/><rect x="3" y="5" width="14" height="5" fill="#bdbdbd"/><path d="M10 3 L10 17 M1 13 L19 13" stroke="#bdbdbd" stroke-width="2"/><rect x="6" y="6" width="2" height="3" fill="#2a2a2a"/><rect x="12" y="6" width="2" height="3" fill="#2a2a2a"/></svg>
<svg class="a" style="left:451px;top:1133px" width="16" height="16" viewBox="0 0 16 16"><circle cx="8" cy="8" r="3" fill="none" stroke="#8a8a8a" stroke-width="1.6"/><path d="M8 0 L8 4 M8 12 L8 16 M0 8 L4 8 M12 8 L16 8 M2 2 L5 5 M11 11 L14 14 M14 2 L11 5 M5 11 L2 14" stroke="#8a8a8a" stroke-width="1.3"/></svg>
<svg class="a" style="left:474px;top:1132px" width="17" height="17" viewBox="0 0 17 17"><path d="M2 15 L15 2" stroke="#bdbdbd" stroke-width="2.2"/></svg>
<div class="t" style="left:497px;top:1128px;font-size:21px;color:#c0c0c0;font-weight:normal;font-family:'Liberation Serif',serif;"><i>fx</i></div>
<div class="a" style="left:543px;top:1130px;width:21px;height:21px;background:#1f1f1f;"></div>
<div class="a" style="left:567px;top:1130px;width:21px;height:21px;background:#1f1f1f;"></div>
<div class="a" style="left:591px;top:1130px;width:21px;height:21px;background:#1f1f1f;"></div>
<div class="a" style="left:639px;top:1128px;width:109px;height:28px;background:#1d1d1d;border-radius:2px"></div>
<div class="t" style="left:650px;top:1132px;font-size:20px;color:#d0d0d0;font-weight:normal;font-family:'Liberation Sans',sans-serif;">正常</div>
<svg class="a" style="left:728px;top:1139px" width="13" height="8" viewBox="0 0 13 8"><path d="M1 1 L6.5 6.5 L12 1" fill="none" stroke="#9a9a9a" stroke-width="1.6"/></svg>
<div class="a" style="left:755px;top:1130px;width:22px;height:21px;background:#1f1f1f;"></div>
<svg class="a" style="left:902px;top:1133px" width="19" height="19" viewBox="0 0 19 19"><path d="M10.03 9.77 L10.17 9.70 L10.29 9.59 L10.38 9.44 L10.45 9.26 L10.48 9.05 L10.46 8.83 L10.39 8.60 L10.26 8.38 L10.09 8.17 L9.86 7.99 L9.59 7.86 L9.28 7.77 L8.95 7.75 L8.60 7.79 L8.25 7.91 L7.91 8.10 L7.60 8.36 L7.34 8.68 L7.13 9.07 L7.00 9.50 L6.95 9.97 L6.98 10.45 L7.11 10.94 L7.34 11.40 L7.66 11.84 L8.06 12.21 L8.55 12.52 L9.09 12.73 L9.68 12.85 L10.31 12.85 L10.93 12.74 L11.55 12.51 L12.12 12.16 L12.63 11.70 L13.06 11.14 L13.39 10.50 L13.60 9.79 L13.68 9.04 L13.62 8.27 L13.42 7.50 L13.07 6.77 L12.59 6.11 L11.98 5.52 L11.26 5.06 L10.45 4.72 L9.58 4.53 L8.67 4.50 L7.75 4.65 L6.86 4.96 L6.03 5.43 L5.28 6.06 L4.65 6.83 L4.15 7.72 L3.83 8.69 L3.68 9.73 L3.72 10.79 L3.96 11.85 L4.39 12.85 L5.01 13.78 L5.80 14.60 L6.73 15.26 L7.79 15.76 L8.93 16.06 L10.13 16.15 L11.34 16.02 L12.52 15.67 L13.64 15.10 L14.65 14.33 L15.51 13.38 L16.20 12.27 L16.68 11.05 L16.94 9.73 L16.95 8.38 L16.72 7.03 L16.24 5.73 L15.53 4.52 L14.59 3.44 L13.47 2.54 L12.19 1.85 L10.78 1.40" fill="none" stroke="#b0b0b0" stroke-width="1.7"/></svg>
<div class="a" style="left:933px;top:1128px;width:140px;height:28px;background:#1d1d1d;border-radius:2px"></div>
<div class="t" style="left:944px;top:1132px;font-size:20px;color:#d0d0d0;font-weight:normal;font-family:'Liberation Sans',sans-serif;">无</div>
<svg class="a" style="left:1053px;top:1139px" width="13" height="8" viewBox="0 0 13 8"><path d="M1 1 L6.5 6.5 L12 1" fill="none" stroke="#9a9a9a" stroke-width="1.6"/></svg>
<div class="a" style="left:4px;top:1159px;width:1100px;height:31px;background:#232323;"></div>
<div class="a" style="left:4px;top:1190px;width:1100px;height:1px;background:#1e1e1e;"></div>
<div class="a" style="left:10px;top:1161px;width:20px;height:22px;background:#1c1c1c;"></div>
<div class="t" style="left:11px;top:1159px;font-size:19px;color:#b0b0b0;font-weight:normal;font-family:'Liberation Serif',serif;"><i>fx</i></div>
<svg class="a" style="left:182px;top:1171px" width="13" height="8" viewBox="0 0 13 8"><path d="M1 1 L6.5 6.5 L12 1" fill="none" stroke="#9a9a9a" stroke-width="1.6"/></svg>
<div class="t" style="left:212px;top:1166px;font-size:17px;color:#a0a0a0;font-weight:normal;font-family:'Liberation Sans',sans-serif;">高斯模糊</div>
<div class="t" style="left:425px;top:1166px;font-size:16px;color:#2d8ceb;font-weight:normal;font-family:'Liberation Sans',sans-serif;text-decoration:underline">重置</div>
<div class="a" style="left:4px;top:1191px;width:1100px;height:31px;background:#232323;"></div>
<div class="a" style="left:4px;top:1222px;width:1100px;height:1px;background:#1e1e1e;"></div>
<svg class="a" style="left:215px;top:1203px" width="13" height="8" viewBox="0 0 13 8"><path d="M1 1 L6.5 6.5 L12 1" fill="none" stroke="#9a9a9a" stroke-width="1.6"/></svg>
<svg class="a" style="left:239px;top:1195px" width="19" height="22" viewBox="0 0 19 22"><path d="M6 1.5 L13 1.5 M9.5 1.5 L9.5 5" stroke="#c0c0c0" stroke-width="2"/><circle cx="9.5" cy="13" r="7.5" fill="none" stroke="#c0c0c0" stroke-width="1.8"/></svg>
<div class="t" style="left:270px;top:1198px;font-size:17px;color:#a0a0a0;font-weight:normal;font-family:'Liberation Sans',sans-serif;">模糊度</div>
<div class="t" style="left:427px;top:1200px;font-size:15px;color:#d8282c;font-weight:normal;font-family:'Liberation Mono',monospace;">40.0</div>
<svg class="a" style="left:922px;top:1195px" width="19" height="19" viewBox="0 0 19 19"><path d="M10.03 9.77 L10.17 9.70 L10.29 9.59 L10.38 9.44 L10.45 9.26 L10.48 9.05 L10.46 8.83 L10.39 8.60 L10.26 8.38 L10.09 8.17 L9.86 7.99 L9.59 7.86 L9.28 7.77 L8.95 7.75 L8.60 7.79 L8.25 7.91 L7.91 8.10 L7.60 8.36 L7.34 8.68 L7.13 9.07 L7.00 9.50 L6.95 9.97 L6.98 10.45 L7.11 10.94 L7.34 11.40 L7.66 11.84 L8.06 12.21 L8.55 12.52 L9.09 12.73 L9.68 12.85 L10.31 12.85 L10.93 12.74 L11.55 12.51 L12.12 12.16 L12.63 11.70 L13.06 11.14 L13.39 10.50 L13.60 9.79 L13.68 9.04 L13.62 8.27 L13.42 7.50 L13.07 6.77 L12.59 6.11 L11.98 5.52 L11.26 5.06 L10.45 4.72 L9.58 4.53 L8.67 4.50 L7.75 4.65 L6.86 4.96 L6.03 5.43 L5.28 6.06 L4.65 6.83 L4.15 7.72 L3.83 8.69 L3.68 9.73 L3.72 10.79 L3.96 11.85 L4.39 12.85 L5.01 13.78 L5.80 14.60 L6.73 15.26 L7.79 15.76 L8.93 16.06 L10.13 16.15 L11.34 16.02 L12.52 15.67 L13.64 15.10 L14.65 14.33 L15.51 13.38 L16.20 12.27 L16.68 11.05 L16.94 9.73 L16.95 8.38 L16.72 7.03 L16.24 5.73 L15.53 4.52 L14.59 3.44 L13.47 2.54 L12.19 1.85 L10.78 1.40" fill="none" stroke="#b0b0b0" stroke-width="1.7"/></svg>
<div class="a" style="left:4px;top:1223px;width:1100px;height:56px;background:#232323;"></div>
<div class="a" style="left:4px;top:1279px;width:1100px;height:1px;background:#1e1e1e;"></div>
<div class="a" style="left:451px;top:1224px;width:23px;height:24px;background:#1c1c1c;border:1px solid #2a2a2a"></div>
<svg class="a" style="left:455px;top:1231px" width="15" height="10" viewBox="0 0 15 10"><path d="M1 2 L14 2 M1 8 L14 8" stroke="#2f8cf0" stroke-width="3"/></svg>
<svg class="a" style="left:479px;top:1229px" width="14" height="15" viewBox="0 0 14 15"><path d="M1 0 L1 14 L14 14 M3 10 L6 5 L9 10 L12 4" fill="none" stroke="#bdbdbd" stroke-width="1.3"/></svg>
<svg class="a" style="left:505px;top:1228px" width="19" height="19" viewBox="0 0 19 19"><path d="M10.03 9.77 L10.17 9.70 L10.29 9.59 L10.38 9.44 L10.45 9.26 L10.48 9.05 L10.46 8.83 L10.39 8.60 L10.26 8.38 L10.09 8.17 L9.86 7.99 L9.59 7.86 L9.28 7.77 L8.95 7.75 L8.60 7.79 L8.25 7.91 L7.91 8.10 L7.60 8.36 L7.34 8.68 L7.13 9.07 L7.00 9.50 L6.95 9.97 L6.98 10.45 L7.11 10.94 L7.34 11.40 L7.66 11.84 L8.06 12.21 L8.55 12.52 L9.09 12.73 L9.68 12.85 L10.31 12.85 L10.93 12.74 L11.55 12.51 L12.12 12.16 L12.63 11.70 L13.06 11.14 L13.39 10.50 L13.60 9.79 L13.68 9.04 L13.62 8.27 L13.42 7.50 L13.07 6.77 L12.59 6.11 L11.98 5.52 L11.26 5.06 L10.45 4.72 L9.58 4.53 L8.67 4.50 L7.75 4.65 L6.86 4.96 L6.03 5.43 L5.28 6.06 L4.65 6.83 L4.15 7.72 L3.83 8.69 L3.68 9.73 L3.72 10.79 L3.96 11.85 L4.39 12.85 L5.01 13.78 L5.80 14.60 L6.73 15.26 L7.79 15.76 L8.93 16.06 L10.13 16.15 L11.34 16.02 L12.52 15.67 L13.64 15.10 L14.65 14.33 L15.51 13.38 L16.20 12.27 L16.68 11.05 L16.94 9.73 L16.95 8.38 L16.72 7.03 L16.24 5.73 L15.53 4.52 L14.59 3.44 L13.47 2.54 L12.19 1.85 L10.78 1.40" fill="none" stroke="#b0b0b0" stroke-width="1.7"/></svg>
<svg class="a" style="left:532px;top:1228px" width="19" height="19" viewBox="0 0 19 19"><circle cx="9.5" cy="9.5" r="9" fill="#bdbdbd"/><path d="M7 5 L14 9.5 L7 14Z" fill="#232323"/></svg>
<div class="t" style="left:275px;top:1243px;font-size:17px;color:#a0a0a0;font-weight:normal;font-family:'Liberation Sans',sans-serif;">表达式：</div>
<div class="t" style="left:346px;top:1243px;font-size:17px;color:#a0a0a0;font-weight:normal;font-family:'Liberation Sans',sans-serif;">模糊度</div>
<div class="a" style="left:4px;top:1277px;width:1100px;height:31px;background:#2b2b2b;"></div>
<div class="a" style="left:4px;top:1308px;width:1100px;height:1px;background:#1e1e1e;"></div>
<div class="a" style="left:10px;top:1280px;width:20px;height:21px;background:#1f1f1f;"></div>
<svg class="a" style="left:12px;top:1285px" width="18" height="12" viewBox="0 0 18 12"><path d="M1 6 Q9 -2 17 6 Q9 14 1 6Z" fill="#bdbdbd"/><circle cx="9" cy="6" r="3" fill="#1f1f1f"/><circle cx="9" cy="6" r="1.5" fill="#bdbdbd"/></svg>
<div class="a" style="left:57px;top:1280px;width:20px;height:21px;background:#1f1f1f;"></div>
<div class="a" style="left:80px;top:1280px;width:21px;height:21px;background:#1f1f1f;"></div>
<svg class="a" style="left:120px;top:1290px" width="13" height="8" viewBox="0 0 13 8"><path d="M1 1 L6.5 6.5 L12 1" fill="none" stroke="#9a9a9a" stroke-width="1.6"/></svg>
<div class="a" style="left:137px;top:1280px;width:24px;height:24px;background:#6a7cf0;"></div>
<div class="t" style="left:172px;top:1285px;font-size:17px;color:#c0c0c0;font-weight:bold;font-family:'Liberation Serif',serif;">2</div>
<svg class="a" style="left:221px;top:1283px" width="19" height="18" viewBox="0 0 19 18"><path d="M9.5 0 L12 6.5 L19 7 L13.5 11 L15.5 18 L9.5 14 L3.5 18 L5.5 11 L0 7 L7 6.5Z" fill="#c8c8c8"/></svg>
<div class="t" style="left:252px;top:1285px;font-size:18.5px;color:#c0c0c0;font-weight:bold;font-family:'Liberation Sans',sans-serif;">形状图层</div>
<div class="t" style="left:337px;top:1287px;font-size:17px;color:#c0c0c0;font-weight:bold;font-family:'Liberation Serif',serif;">2</div>
<div class="a" style="left:424px;top:1280px;width:21px;height:21px;background:#1f1f1f;"></div>
<div class="a" style="left:448px;top:1280px;width:21px;height:21px;background:#1f1f1f;"></div>
<div class="a" style="left:472px;top:1280px;width:21px;height:21px;background:#1f1f1f;"></div>
<div class="a" style="left:496px;top:1280px;width:21px;height:21px;background:#1f1f1f;"></div>
<svg class="a" style="left:424px;top:1282px" width="20" height="18" viewBox="0 0 20 18"><path d="M4 6 Q10 -1 16 6 Z" fill="#bdbdbd"/><rect x="3" y="5" width="14" height="5" fill="#bdbdbd"/><path d="M10 3 L10 17 M1 13 L19 13" stroke="#bdbdbd" stroke-width="2"/><rect x="6" y="6" width="2" height="3" fill="#2a2a2a"/><rect x="12" y="6" width="2" height="3" fill="#2a2a2a"/></svg>
<svg class="a" style="left:451px;top:1283px" width="16" height="16" viewBox="0 0 16 16"><circle cx="8" cy="8" r="3" fill="none" stroke="#8a8a8a" stroke-width="1.6"/><path d="M8 0 L8 4 M8 12 L8 16 M0 8 L4 8 M12 8 L16 8 M2 2 L5 5 M11 11 L14 14 M14 2 L11 5 M5 11 L2 14" stroke="#8a8a8a" stroke-width="1.3"/></svg>
<svg class="a" style="left:474px;top:1282px" width="17" height="17" viewBox="0 0 17 17"><path d="M2 15 L15 2" stroke="#bdbdbd" stroke-width="2.2"/></svg>
<div class="t" style="left:497px;top:1278px;font-size:21px;color:#c0c0c0;font-weight:normal;font-family:'Liberation Serif',serif;"><i>fx</i></div>
<div class="a" style="left:543px;top:1280px;width:21px;height:21px;background:#1f1f1f;"></div>
<div class="a" style="left:567px;top:1280px;width:21px;height:21px;background:#1f1f1f;"></div>
<div class="a" style="left:591px;top:1280px;width:21px;height:21px;background:#1f1f1f;"></div>
<div class="a" style="left:639px;top:1278px;width:109px;height:28px;background:#1d1d1d;border-radius:2px"></div>
<div class="t" style="left:650px;top:1282px;font-size:20px;color:#d0d0d0;font-weight:normal;font-family:'Liberation Sans',sans-serif;">正常</div>
<svg class="a" style="left:728px;top:1289px" width="13" height="8" viewBox="0 0 13 8"><path d="M1 1 L6.5 6.5 L12 1" fill="none" stroke="#9a9a9a" stroke-width="1.6"/></svg>
<div class="a" style="left:755px;top:1280px;width:22px;height:21px;background:#1f1f1f;"></div>
<div class="a" style="left:785px;top:1278px;width:103px;height:28px;background:#1d1d1d;border-radius:2px"></div>
<div class="t" style="left:796px;top:1282px;font-size:20px;color:#d0d0d0;font-weight:normal;font-family:'Liberation Sans',sans-serif;">无</div>
<svg class="a" style="left:868px;top:1289px" width="13" height="8" viewBox="0 0 13 8"><path d="M1 1 L6.5 6.5 L12 1" fill="none" stroke="#9a9a9a" stroke-width="1.6"/></svg>
<svg class="a" style="left:902px;top:1283px" width="19" height="19" viewBox="0 0 19 19"><path d="M10.03 9.77 L10.17 9.70 L10.29 9.59 L10.38 9.44 L10.45 9.26 L10.48 9.05 L10.46 8.83 L10.39 8.60 L10.26 8.38 L10.09 8.17 L9.86 7.99 L9.59 7.86 L9.28 7.77 L8.95 7.75 L8.60 7.79 L8.25 7.91 L7.91 8.10 L7.60 8.36 L7.34 8.68 L7.13 9.07 L7.00 9.50 L6.95 9.97 L6.98 10.45 L7.11 10.94 L7.34 11.40 L7.66 11.84 L8.06 12.21 L8.55 12.52 L9.09 12.73 L9.68 12.85 L10.31 12.85 L10.93 12.74 L11.55 12.51 L12.12 12.16 L12.63 11.70 L13.06 11.14 L13.39 10.50 L13.60 9.79 L13.68 9.04 L13.62 8.27 L13.42 7.50 L13.07 6.77 L12.59 6.11 L11.98 5.52 L11.26 5.06 L10.45 4.72 L9.58 4.53 L8.67 4.50 L7.75 4.65 L6.86 4.96 L6.03 5.43 L5.28 6.06 L4.65 6.83 L4.15 7.72 L3.83 8.69 L3.68 9.73 L3.72 10.79 L3.96 11.85 L4.39 12.85 L5.01 13.78 L5.80 14.60 L6.73 15.26 L7.79 15.76 L8.93 16.06 L10.13 16.15 L11.34 16.02 L12.52 15.67 L13.64 15.10 L14.65 14.33 L15.51 13.38 L16.20 12.27 L16.68 11.05 L16.94 9.73 L16.95 8.38 L16.72 7.03 L16.24 5.73 L15.53 4.52 L14.59 3.44 L13.47 2.54 L12.19 1.85 L10.78 1.40" fill="none" stroke="#b0b0b0" stroke-width="1.7"/></svg>
<div class="a" style="left:933px;top:1278px;width:140px;height:28px;background:#1d1d1d;border-radius:2px"></div>
<div class="t" style="left:944px;top:1282px;font-size:20px;color:#d0d0d0;font-weight:normal;font-family:'Liberation Sans',sans-serif;">无</div>
<svg class="a" style="left:1053px;top:1289px" width="13" height="8" viewBox="0 0 13 8"><path d="M1 1 L6.5 6.5 L12 1" fill="none" stroke="#9a9a9a" stroke-width="1.6"/></svg>
<div class="a" style="left:4px;top:1309px;width:1100px;height:31px;background:#232323;"></div>
<div class="a" style="left:4px;top:1340px;width:1100px;height:1px;background:#1e1e1e;"></div>
<div class="a" style="left:10px;top:1311px;width:20px;height:22px;background:#1c1c1c;"></div>
<div class="t" style="left:11px;top:1309px;font-size:19px;color:#b0b0b0;font-weight:normal;font-family:'Liberation Serif',serif;"><i>fx</i></div>
<svg class="a" style="left:182px;top:1321px" width="13" height="8" viewBox="0 0 13 8"><path d="M1 1 L6.5 6.5 L12 1" fill="none" stroke="#9a9a9a" stroke-width="1.6"/></svg>
<div class="t" style="left:212px;top:1316px;font-size:17px;color:#a0a0a0;font-weight:normal;font-family:'Liberation Sans',sans-serif;">高斯模糊</div>
<div class="t" style="left:425px;top:1316px;font-size:16px;color:#2d8ceb;font-weight:normal;font-family:'Liberation Sans',sans-serif;text-decoration:underline">重置</div>
<div class="a" style="left:4px;top:1341px;width:1100px;height:31px;background:#232323;"></div>
<div class="a" style="left:4px;top:1372px;width:1100px;height:1px;background:#1e1e1e;"></div>
<svg class="a" style="left:215px;top:1353px" width="13" height="8" viewBox="0 0 13 8"><path d="M1 1 L6.5 6.5 L12 1" fill="none" stroke="#9a9a9a" stroke-width="1.6"/></svg>
<svg class="a" style="left:239px;top:1345px" width="19" height="22" viewBox="0 0 19 22"><path d="M6 1.5 L13 1.5 M9.5 1.5 L9.5 5" stroke="#c0c0c0" stroke-width="2"/><circle cx="9.5" cy="13" r="7.5" fill="none" stroke="#c0c0c0" stroke-width="1.8"/></svg>
<div class="t" style="left:270px;top:1348px;font-size:17px;color:#a0a0a0;font-weight:normal;font-family:'Liberation Sans',sans-serif;">模糊度</div>
<div class="t" style="left:427px;top:1350px;font-size:15px;color:#d8282c;font-weight:normal;font-family:'Liberation Mono',monospace;">40.0</div>
<svg class="a" style="left:922px;top:1345px" width="19" height="19" viewBox="0 0 19 19"><path d="M10.03 9.77 L10.17 9.70 L10.29 9.59 L10.38 9.44 L10.45 9.26 L10.48 9.05 L10.46 8.83 L10.39 8.60 L10.26 8.38 L10.09 8.17 L9.86 7.99 L9.59 7.86 L9.28 7.77 L8.95 7.75 L8.60 7.79 L8.25 7.91 L7.91 8.10 L7.60 8.36 L7.34 8.68 L7.13 9.07 L7.00 9.50 L6.95 9.97 L6.98 10.45 L7.11 10.94 L7.34 11.40 L7.66 11.84 L8.06 12.21 L8.55 12.52 L9.09 12.73 L9.68 12.85 L10.31 12.85 L10.93 12.74 L11.55 12.51 L12.12 12.16 L12.63 11.70 L13.06 11.14 L13.39 10.50 L13.60 9.79 L13.68 9.04 L13.62 8.27 L13.42 7.50 L13.07 6.77 L12.59 6.11 L11.98 5.52 L11.26 5.06 L10.45 4.72 L9.58 4.53 L8.67 4.50 L7.75 4.65 L6.86 4.96 L6.03 5.43 L5.28 6.06 L4.65 6.83 L4.15 7.72 L3.83 8.69 L3.68 9.73 L3.72 10.79 L3.96 11.85 L4.39 12.85 L5.01 13.78 L5.80 14.60 L6.73 15.26 L7.79 15.76 L8.93 16.06 L10.13 16.15 L11.34 16.02 L12.52 15.67 L13.64 15.10 L14.65 14.33 L15.51 13.38 L16.20 12.27 L16.68 11.05 L16.94 9.73 L16.95 8.38 L16.72 7.03 L16.24 5.73 L15.53 4.52 L14.59 3.44 L13.47 2.54 L12.19 1.85 L10.78 1.40" fill="none" stroke="#b0b0b0" stroke-width="1.7"/></svg>
<div class="a" style="left:4px;top:1373px;width:1100px;height:56px;background:#232323;"></div>
<div class="a" style="left:4px;top:1429px;width:1100px;height:1px;background:#1e1e1e;"></div>
<div class="a" style="left:451px;top:1374px;width:23px;height:24px;background:#1c1c1c;border:1px solid #2a2a2a"></div>
<svg class="a" style="left:455px;top:1381px" width="15" height="10" viewBox="0 0 15 10"><path d="M1 2 L14 2 M1 8 L14 8" stroke="#2f8cf0" stroke-width="3"/></svg>
<svg class="a" style="left:479px;top:1379px" width="14" height="15" viewBox="0 0 14 15"><path d="M1 0 L1 14 L14 14 M3 10 L6 5 L9 10 L12 4" fill="none" stroke="#bdbdbd" stroke-width="1.3"/></svg>
<svg class="a" style="left:505px;top:1378px" width="19" height="19" viewBox="0 0 19 19"><path d="M10.03 9.77 L10.17 9.70 L10.29 9.59 L10.38 9.44 L10.45 9.26 L10.48 9.05 L10.46 8.83 L10.39 8.60 L10.26 8.38 L10.09 8.17 L9.86 7.99 L9.59 7.86 L9.28 7.77 L8.95 7.75 L8.60 7.79 L8.25 7.91 L7.91 8.10 L7.60 8.36 L7.34 8.68 L7.13 9.07 L7.00 9.50 L6.95 9.97 L6.98 10.45 L7.11 10.94 L7.34 11.40 L7.66 11.84 L8.06 12.21 L8.55 12.52 L9.09 12.73 L9.68 12.85 L10.31 12.85 L10.93 12.74 L11.55 12.51 L12.12 12.16 L12.63 11.70 L13.06 11.14 L13.39 10.50 L13.60 9.79 L13.68 9.04 L13.62 8.27 L13.42 7.50 L13.07 6.77 L12.59 6.11 L11.98 5.52 L11.26 5.06 L10.45 4.72 L9.58 4.53 L8.67 4.50 L7.75 4.65 L6.86 4.96 L6.03 5.43 L5.28 6.06 L4.65 6.83 L4.15 7.72 L3.83 8.69 L3.68 9.73 L3.72 10.79 L3.96 11.85 L4.39 12.85 L5.01 13.78 L5.80 14.60 L6.73 15.26 L7.79 15.76 L8.93 16.06 L10.13 16.15 L11.34 16.02 L12.52 15.67 L13.64 15.10 L14.65 14.33 L15.51 13.38 L16.20 12.27 L16.68 11.05 L16.94 9.73 L16.95 8.38 L16.72 7.03 L16.24 5.73 L15.53 4.52 L14.59 3.44 L13.47 2.54 L12.19 1.85 L10.78 1.40" fill="none" stroke="#b0b0b0" stroke-width="1.7"/></svg>
<svg class="a" style="left:532px;top:1378px" width="19" height="19" viewBox="0 0 19 19"><circle cx="9.5" cy="9.5" r="9" fill="#bdbdbd"/><path d="M7 5 L14 9.5 L7 14Z" fill="#232323"/></svg>
<div class="t" style="left:275px;top:1393px;font-size:17px;color:#a0a0a0;font-weight:normal;font-family:'Liberation Sans',sans-serif;">表达式：</div>
<div class="t" style="left:346px;top:1393px;font-size:17px;color:#a0a0a0;font-weight:normal;font-family:'Liberation Sans',sans-serif;">模糊度</div>
<div class="a" style="left:1106px;top:998px;width:1894px;height:52px;background:#232323;"></div>
<div class="a" style="left:1106px;top:1062px;width:1894px;height:2px;background:#101010;"></div>
<div class="a" style="left:1106px;top:1064px;width:1894px;height:29px;background:#262626;"></div>
<div class="a" style="left:1106px;top:1093px;width:1894px;height:2px;background:#101010;"></div>
<div class="a" style="left:1119px;top:1049px;width:1870px;height:13px;background:#7a7a7a;"></div>
<div class="a" style="left:2989px;top:1049px;width:11px;height:13px;background:#232323;"></div>
<svg class="a" style="left:1104px;top:1049px" width="13" height="13" viewBox="0 0 13 13"><path d="M13 0 L7 0 Q0 0 0 6.5 Q0 13 7 13 L13 13Z" fill="#2f8cf0"/></svg>
<svg class="a" style="left:2989px;top:1049px" width="11" height="13" viewBox="0 0 11 13"><path d="M0 0 L4 0 Q11 0 11 6.5 Q11 13 4 13 L0 13Z" fill="#2f8cf0"/></svg>
<div class="a" style="left:1491.56px;top:1086px;width:1.2px;height:6px;background:#b0b0b0;"></div>
<div class="t" style="left:1477px;top:1068px;font-size:15px;color:#c8c8c8;font-weight:normal;font-family:'Liberation Mono',monospace;letter-spacing:-1px">01s</div>
<div class="a" style="left:1865.62px;top:1086px;width:1.2px;height:6px;background:#b0b0b0;"></div>
<div class="t" style="left:1851px;top:1068px;font-size:15px;color:#c8c8c8;font-weight:normal;font-family:'Liberation Mono',monospace;letter-spacing:-1px">02s</div>
<div class="a" style="left:2239.6800000000003px;top:1086px;width:1.2px;height:6px;background:#b0b0b0;"></div>
<div class="t" style="left:2225px;top:1068px;font-size:15px;color:#c8c8c8;font-weight:normal;font-family:'Liberation Mono',monospace;letter-spacing:-1px">03s</div>
<div class="a" style="left:2613.74px;top:1086px;width:1.2px;height:6px;background:#b0b0b0;"></div>
<div class="t" style="left:2599px;top:1068px;font-size:15px;color:#c8c8c8;font-weight:normal;font-family:'Liberation Mono',monospace;letter-spacing:-1px">04s</div>
<div class="a" style="left:2987.8px;top:1086px;width:1.2px;height:6px;background:#b0b0b0;"></div>
<div class="t" style="left:2973px;top:1068px;font-size:15px;color:#c8c8c8;font-weight:normal;font-family:'Liberation Mono',monospace;letter-spacing:-1px">05s</div>
<div class="t" style="left:1128px;top:1067px;font-size:15px;color:#c8c8c8;font-weight:normal;font-family:'Liberation Mono',monospace;letter-spacing:-1px">0s</div>
<div class="a" style="left:1119px;top:1095px;width:1870px;height:24px;background:#666666;"></div>
<div class="a" style="left:1107px;top:1095px;width:12px;height:24px;background:#232323;"></div>
<svg class="a" style="left:1107px;top:1096px" width="10" height="23" viewBox="0 0 10 23"><path d="M10 0 L6 0 Q0 0 0 8 L0 15 Q0 23 6 23 L10 23Z" fill="#2f8cf0"/></svg>
<svg class="a" style="left:2988px;top:1096px" width="10" height="23" viewBox="0 0 10 23"><path d="M0 0 L4 0 Q10 0 10 8 L10 15 Q10 23 4 23 L0 23Z" fill="#2f8cf0"/></svg>
<div class="a" style="left:1119px;top:1119px;width:1870px;height:6px;background:#18c02a;"></div>
<div class="a" style="left:1106px;top:1125px;width:1894px;height:2px;background:#0e0e0e;"></div>
<div class="a" style="left:1106px;top:1127px;width:1894px;height:31px;background:#2b2b2b;"></div>
<div class="a" style="left:1119px;top:1129px;width:1870px;height:27px;background:#515a8c;"></div>
<div class="a" style="left:1106px;top:1158px;width:1894px;height:1px;background:#1c1c1c;"></div>
<div class="a" style="left:1106px;top:1159px;width:1894px;height:31px;background:#333333;"></div>
<div class="a" style="left:1118px;top:1159px;width:14px;height:31px;background:#4a4a4a;"></div>
<div class="a" style="left:1106px;top:1190px;width:1894px;height:1px;background:#1c1c1c;"></div>
<div class="a" style="left:1106px;top:1191px;width:1894px;height:31px;background:#333333;"></div>
<div class="a" style="left:1118px;top:1191px;width:14px;height:31px;background:#4a4a4a;"></div>
<div class="a" style="left:1106px;top:1222px;width:1894px;height:1px;background:#1c1c1c;"></div>
<div class="a" style="left:1106px;top:1223px;width:1894px;height:56px;background:#333333;"></div>
<div class="a" style="left:1118px;top:1223px;width:14px;height:56px;background:#4a4a4a;"></div>
<div class="a" style="left:1106px;top:1279px;width:1894px;height:1px;background:#1c1c1c;"></div>
<div class="a" style="left:1106px;top:1277px;width:1894px;height:31px;background:#2b2b2b;"></div>
<div class="a" style="left:1119px;top:1279px;width:1870px;height:27px;background:#515a8c;"></div>
<div class="a" style="left:1106px;top:1308px;width:1894px;height:1px;background:#1c1c1c;"></div>
<div class="a" style="left:1106px;top:1309px;width:1894px;height:31px;background:#333333;"></div>
<div class="a" style="left:1118px;top:1309px;width:14px;height:31px;background:#4a4a4a;"></div>
<div class="a" style="left:1106px;top:1340px;width:1894px;height:1px;background:#1c1c1c;"></div>
<div class="a" style="left:1106px;top:1341px;width:1894px;height:31px;background:#333333;"></div>
<div class="a" style="left:1118px;top:1341px;width:14px;height:31px;background:#4a4a4a;"></div>
<div class="a" style="left:1106px;top:1372px;width:1894px;height:1px;background:#1c1c1c;"></div>
<div class="a" style="left:1106px;top:1373px;width:1894px;height:56px;background:#333333;"></div>
<div class="a" style="left:1118px;top:1373px;width:14px;height:56px;background:#4a4a4a;"></div>
<div class="a" style="left:1106px;top:1429px;width:1894px;height:1px;background:#1c1c1c;"></div>
<div class="a" style="left:2989px;top:1159px;width:11px;height:31px;background:#2a2a2a;"></div>
<div class="a" style="left:2989px;top:1191px;width:11px;height:31px;background:#2a2a2a;"></div>
<div class="a" style="left:2989px;top:1223px;width:11px;height:56px;background:#2a2a2a;"></div>
<div class="a" style="left:2989px;top:1309px;width:11px;height:31px;background:#2a2a2a;"></div>
<div class="a" style="left:2989px;top:1341px;width:11px;height:31px;background:#2a2a2a;"></div>
<div class="a" style="left:2989px;top:1373px;width:11px;height:56px;background:#2a2a2a;"></div>
<div class="a" style="left:1106px;top:1427px;width:1894px;height:120px;background:#313131;"></div>
<div class="a" style="left:1118px;top:1428px;width:14px;height:119px;background:#4a4a4a;"></div>
<div class="a" style="left:1106px;top:1427px;width:1894px;height:1px;background:#1c1c1c;"></div>
<div class="a" style="left:1106px;top:1127px;width:12px;height:420px;background:#282828;"></div>
<div class="t" style="left:1130px;top:1223px;font-size:17.6px;color:#b0b0b0;font-weight:normal;font-family:'Liberation Mono',monospace;letter-spacing:0.8px">effect(&quot;<span style="font-family:'Liberation Sans',sans-serif;font-size:20.5px">高斯模糊</span>&quot;).param(&quot;<span style="font-family:'Liberation Sans',sans-serif;font-size:20.5px">模糊度</span>&quot;)</div>
<div class="t" style="left:1130px;top:1373px;font-size:17.6px;color:#b0b0b0;font-weight:normal;font-family:'Liberation Mono',monospace;letter-spacing:0.8px">effect(&quot;<span style="font-family:'Liberation Sans',sans-serif;font-size:20.5px">高斯模糊</span>&quot;).param(1)</div>
<div class="a" style="left:1117px;top:1093px;width:1.5px;height:454px;background:#4d8fe0;"></div>
<svg class="a" style="left:1112px;top:1163px" width="12" height="18" viewBox="0 0 12 18"><path d="M1 1.5 L11 1.5 M1 16.5 L11 16.5" stroke="#b8b8b8" stroke-width="2"/><path d="M6 1 L6 17" stroke="#c0c8d8" stroke-width="2.6"/></svg>
<svg class="a" style="left:1112px;top:1195px" width="12" height="18" viewBox="0 0 12 18"><path d="M1 1.5 L11 1.5 M1 16.5 L11 16.5" stroke="#b8b8b8" stroke-width="2"/><path d="M6 1 L6 17" stroke="#c0c8d8" stroke-width="2.6"/></svg>
<svg class="a" style="left:1112px;top:1313px" width="12" height="18" viewBox="0 0 12 18"><path d="M1 1.5 L11 1.5 M1 16.5 L11 16.5" stroke="#b8b8b8" stroke-width="2"/><path d="M6 1 L6 17" stroke="#c0c8d8" stroke-width="2.6"/></svg>
<svg class="a" style="left:1112px;top:1345px" width="12" height="18" viewBox="0 0 12 18"><path d="M1 1.5 L11 1.5 M1 16.5 L11 16.5" stroke="#b8b8b8" stroke-width="2"/><path d="M6 1 L6 17" stroke="#c0c8d8" stroke-width="2.6"/></svg>
<svg class="a" style="left:1108px;top:1069px" width="19" height="25" viewBox="0 0 19 25"><path d="M1 1 L18 1 L18 12 L9.5 24 L1 12Z" fill="#2f8cf0"/><path d="M8 14 L11 14" stroke="#1a3a70" stroke-width="1"/></svg>
</body></html>
